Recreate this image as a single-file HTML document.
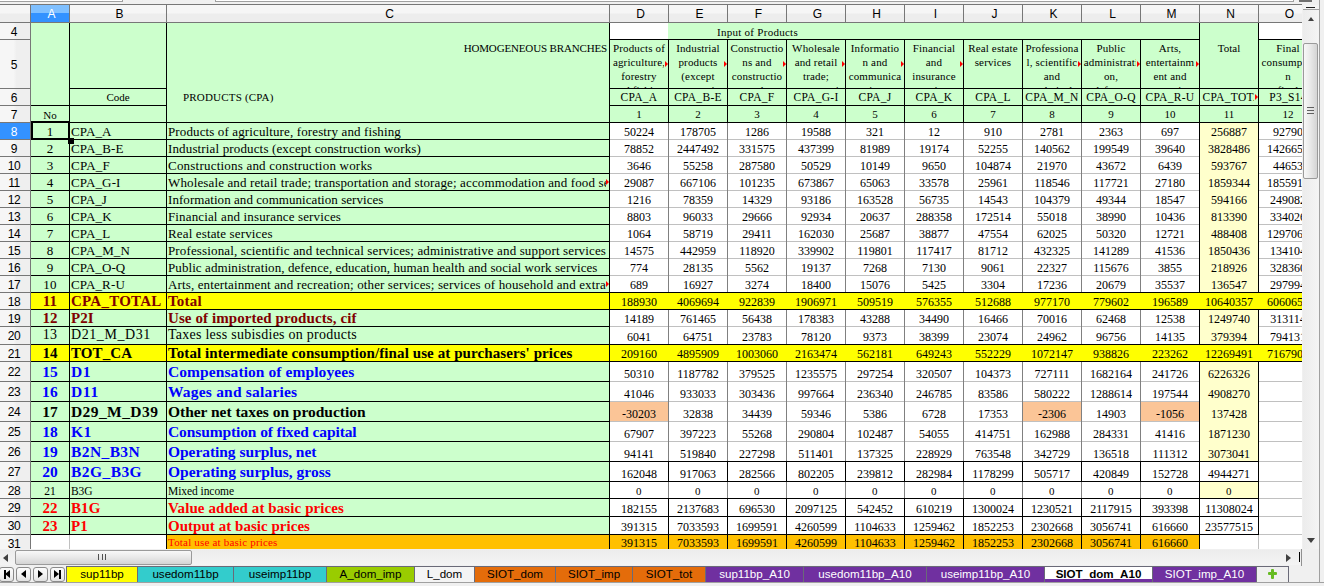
<!DOCTYPE html>
<html><head><meta charset="utf-8"><style>
html,body{margin:0;padding:0;width:1324px;height:586px;overflow:hidden;background:#f0f0f0;}
div{position:absolute;}
.t{white-space:nowrap;line-height:0;}
.c{overflow:hidden;}
#sheet{left:0;top:0;width:1302px;height:549px;overflow:hidden;}
</style></head><body>
<div style="left:0px;top:0px;width:1324px;height:4px;background:#f0f0f0;"></div>
<div style="left:0px;top:0px;width:123px;height:1px;background:#ffffff;"></div>
<div style="left:0px;top:1px;width:123px;height:1px;background:#a0a0a0;"></div>
<div style="left:215px;top:0px;width:1079px;height:1px;background:#ffffff;"></div>
<div style="left:215px;top:1px;width:1079px;height:1px;background:#a0a0a0;"></div>
<div style="left:1293px;top:0px;width:1px;height:2px;background:#a0a0a0;"></div>
<div style="left:122px;top:0px;width:1px;height:2px;background:#a0a0a0;"></div>
<div style="left:215px;top:0px;width:1px;height:2px;background:#a0a0a0;"></div>
<div style="left:1299px;top:0px;width:13px;height:2px;background:#707070;"></div>
<div style="left:0px;top:4px;width:1302px;height:1px;background:#777777;"></div>
<div style="left:0px;top:5px;width:1302px;height:17px;background:linear-gradient(#f6f6f6,#f6f6f6 45%,#ededed 55%,#ededed);"></div>
<div style="left:0px;top:22px;width:1302px;height:1px;background:#777777;"></div>
<div style="left:31px;top:5px;width:38px;height:17px;background:linear-gradient(#80c0ff,#80c0ff 47%,#3392ff 50%,#3392ff);"></div>
<div style="left:69px;top:5px;width:1px;height:17px;background:#777777;"></div>
<div style="left:166px;top:5px;width:1px;height:17px;background:#777777;"></div>
<div style="left:609px;top:5px;width:1px;height:17px;background:#777777;"></div>
<div style="left:668px;top:5px;width:1px;height:17px;background:#777777;"></div>
<div style="left:727px;top:5px;width:1px;height:17px;background:#777777;"></div>
<div style="left:786px;top:5px;width:1px;height:17px;background:#777777;"></div>
<div style="left:845px;top:5px;width:1px;height:17px;background:#777777;"></div>
<div style="left:904px;top:5px;width:1px;height:17px;background:#777777;"></div>
<div style="left:963px;top:5px;width:1px;height:17px;background:#777777;"></div>
<div style="left:1022px;top:5px;width:1px;height:17px;background:#777777;"></div>
<div style="left:1081px;top:5px;width:1px;height:17px;background:#777777;"></div>
<div style="left:1140px;top:5px;width:1px;height:17px;background:#777777;"></div>
<div style="left:1199px;top:5px;width:1px;height:17px;background:#777777;"></div>
<div style="left:1258px;top:5px;width:1px;height:17px;background:#777777;"></div>
<div style="left:30px;top:5px;width:1px;height:17px;background:#777777;"></div>
<div class="t" style="left:32.5px;width:38px;text-align:center;top:14.34px;font-family:'Liberation Sans', sans-serif;font-size:12px;color:#ffffff">A</div>
<div class="t" style="left:71.5px;width:96px;text-align:center;top:14.34px;font-family:'Liberation Sans', sans-serif;font-size:12px;color:#000000">B</div>
<div class="t" style="left:168.5px;width:442px;text-align:center;top:14.34px;font-family:'Liberation Sans', sans-serif;font-size:12px;color:#000000">C</div>
<div class="t" style="left:611.5px;width:58px;text-align:center;top:14.34px;font-family:'Liberation Sans', sans-serif;font-size:12px;color:#000000">D</div>
<div class="t" style="left:670.5px;width:58px;text-align:center;top:14.34px;font-family:'Liberation Sans', sans-serif;font-size:12px;color:#000000">E</div>
<div class="t" style="left:729.5px;width:58px;text-align:center;top:14.34px;font-family:'Liberation Sans', sans-serif;font-size:12px;color:#000000">F</div>
<div class="t" style="left:788.5px;width:58px;text-align:center;top:14.34px;font-family:'Liberation Sans', sans-serif;font-size:12px;color:#000000">G</div>
<div class="t" style="left:847.5px;width:58px;text-align:center;top:14.34px;font-family:'Liberation Sans', sans-serif;font-size:12px;color:#000000">H</div>
<div class="t" style="left:906.5px;width:58px;text-align:center;top:14.34px;font-family:'Liberation Sans', sans-serif;font-size:12px;color:#000000">I</div>
<div class="t" style="left:965.5px;width:58px;text-align:center;top:14.34px;font-family:'Liberation Sans', sans-serif;font-size:12px;color:#000000">J</div>
<div class="t" style="left:1024.5px;width:58px;text-align:center;top:14.34px;font-family:'Liberation Sans', sans-serif;font-size:12px;color:#000000">K</div>
<div class="t" style="left:1083.5px;width:58px;text-align:center;top:14.34px;font-family:'Liberation Sans', sans-serif;font-size:12px;color:#000000">L</div>
<div class="t" style="left:1142.5px;width:58px;text-align:center;top:14.34px;font-family:'Liberation Sans', sans-serif;font-size:12px;color:#000000">M</div>
<div class="t" style="left:1201.5px;width:58px;text-align:center;top:14.34px;font-family:'Liberation Sans', sans-serif;font-size:12px;color:#000000">N</div>
<div class="t" style="left:1260.5px;width:58px;text-align:center;top:14.34px;font-family:'Liberation Sans', sans-serif;font-size:12px;color:#000000">O</div>
<div style="left:0px;top:23px;width:30px;height:526px;background:linear-gradient(90deg,#f6f6f6,#f6f6f6 45%,#efefef 55%,#efefef);"></div>
<div style="left:30px;top:23px;width:1px;height:526px;background:#777777;"></div>
<div style="left:0px;top:39px;width:30px;height:1px;background:#777777;"></div>
<div class="t" style="left:0;width:28px;letter-spacing:-0.4px;text-align:center;top:31.84px;font-family:'Liberation Sans', sans-serif;font-size:12px;color:#000000">4</div>
<div style="left:0px;top:88px;width:30px;height:1px;background:#777777;"></div>
<div class="t" style="left:0;width:28px;letter-spacing:-0.4px;text-align:center;top:64.84px;font-family:'Liberation Sans', sans-serif;font-size:12px;color:#000000">5</div>
<div style="left:0px;top:105px;width:30px;height:1px;background:#777777;"></div>
<div class="t" style="left:0;width:28px;letter-spacing:-0.4px;text-align:center;top:97.84px;font-family:'Liberation Sans', sans-serif;font-size:12px;color:#000000">6</div>
<div style="left:0px;top:122px;width:30px;height:1px;background:#777777;"></div>
<div class="t" style="left:0;width:28px;letter-spacing:-0.4px;text-align:center;top:114.84px;font-family:'Liberation Sans', sans-serif;font-size:12px;color:#000000">7</div>
<div style="left:0px;top:123px;width:30px;height:16px;background:#3392ff;"></div>
<div style="left:0px;top:139px;width:30px;height:1px;background:#777777;"></div>
<div class="t" style="left:0;width:28px;letter-spacing:-0.4px;text-align:center;top:131.84px;font-family:'Liberation Sans', sans-serif;font-size:12px;color:#ffffff">8</div>
<div style="left:0px;top:156px;width:30px;height:1px;background:#777777;"></div>
<div class="t" style="left:0;width:28px;letter-spacing:-0.4px;text-align:center;top:148.84px;font-family:'Liberation Sans', sans-serif;font-size:12px;color:#000000">9</div>
<div style="left:0px;top:173px;width:30px;height:1px;background:#777777;"></div>
<div class="t" style="left:0;width:28px;letter-spacing:-0.4px;text-align:center;top:165.84px;font-family:'Liberation Sans', sans-serif;font-size:12px;color:#000000">10</div>
<div style="left:0px;top:190px;width:30px;height:1px;background:#777777;"></div>
<div class="t" style="left:0;width:28px;letter-spacing:-0.4px;text-align:center;top:182.84px;font-family:'Liberation Sans', sans-serif;font-size:12px;color:#000000">11</div>
<div style="left:0px;top:207px;width:30px;height:1px;background:#777777;"></div>
<div class="t" style="left:0;width:28px;letter-spacing:-0.4px;text-align:center;top:199.84px;font-family:'Liberation Sans', sans-serif;font-size:12px;color:#000000">12</div>
<div style="left:0px;top:224px;width:30px;height:1px;background:#777777;"></div>
<div class="t" style="left:0;width:28px;letter-spacing:-0.4px;text-align:center;top:216.84px;font-family:'Liberation Sans', sans-serif;font-size:12px;color:#000000">13</div>
<div style="left:0px;top:241px;width:30px;height:1px;background:#777777;"></div>
<div class="t" style="left:0;width:28px;letter-spacing:-0.4px;text-align:center;top:233.84px;font-family:'Liberation Sans', sans-serif;font-size:12px;color:#000000">14</div>
<div style="left:0px;top:258px;width:30px;height:1px;background:#777777;"></div>
<div class="t" style="left:0;width:28px;letter-spacing:-0.4px;text-align:center;top:250.84px;font-family:'Liberation Sans', sans-serif;font-size:12px;color:#000000">15</div>
<div style="left:0px;top:275px;width:30px;height:1px;background:#777777;"></div>
<div class="t" style="left:0;width:28px;letter-spacing:-0.4px;text-align:center;top:267.84px;font-family:'Liberation Sans', sans-serif;font-size:12px;color:#000000">16</div>
<div style="left:0px;top:292px;width:30px;height:1px;background:#777777;"></div>
<div class="t" style="left:0;width:28px;letter-spacing:-0.4px;text-align:center;top:284.84px;font-family:'Liberation Sans', sans-serif;font-size:12px;color:#000000">17</div>
<div style="left:0px;top:309px;width:30px;height:1px;background:#777777;"></div>
<div class="t" style="left:0;width:28px;letter-spacing:-0.4px;text-align:center;top:301.84px;font-family:'Liberation Sans', sans-serif;font-size:12px;color:#000000">18</div>
<div style="left:0px;top:326px;width:30px;height:1px;background:#777777;"></div>
<div class="t" style="left:0;width:28px;letter-spacing:-0.4px;text-align:center;top:318.84px;font-family:'Liberation Sans', sans-serif;font-size:12px;color:#000000">19</div>
<div style="left:0px;top:344px;width:30px;height:1px;background:#777777;"></div>
<div class="t" style="left:0;width:28px;letter-spacing:-0.4px;text-align:center;top:336.34px;font-family:'Liberation Sans', sans-serif;font-size:12px;color:#000000">20</div>
<div style="left:0px;top:361px;width:30px;height:1px;background:#777777;"></div>
<div class="t" style="left:0;width:28px;letter-spacing:-0.4px;text-align:center;top:353.84px;font-family:'Liberation Sans', sans-serif;font-size:12px;color:#000000">21</div>
<div style="left:0px;top:381px;width:30px;height:1px;background:#777777;"></div>
<div class="t" style="left:0;width:28px;letter-spacing:-0.4px;text-align:center;top:372.34px;font-family:'Liberation Sans', sans-serif;font-size:12px;color:#000000">22</div>
<div style="left:0px;top:401px;width:30px;height:1px;background:#777777;"></div>
<div class="t" style="left:0;width:28px;letter-spacing:-0.4px;text-align:center;top:392.34px;font-family:'Liberation Sans', sans-serif;font-size:12px;color:#000000">23</div>
<div style="left:0px;top:421px;width:30px;height:1px;background:#777777;"></div>
<div class="t" style="left:0;width:28px;letter-spacing:-0.4px;text-align:center;top:412.34px;font-family:'Liberation Sans', sans-serif;font-size:12px;color:#000000">24</div>
<div style="left:0px;top:441px;width:30px;height:1px;background:#777777;"></div>
<div class="t" style="left:0;width:28px;letter-spacing:-0.4px;text-align:center;top:432.34px;font-family:'Liberation Sans', sans-serif;font-size:12px;color:#000000">25</div>
<div style="left:0px;top:461px;width:30px;height:1px;background:#777777;"></div>
<div class="t" style="left:0;width:28px;letter-spacing:-0.4px;text-align:center;top:452.34px;font-family:'Liberation Sans', sans-serif;font-size:12px;color:#000000">26</div>
<div style="left:0px;top:481px;width:30px;height:1px;background:#777777;"></div>
<div class="t" style="left:0;width:28px;letter-spacing:-0.4px;text-align:center;top:472.34px;font-family:'Liberation Sans', sans-serif;font-size:12px;color:#000000">27</div>
<div style="left:0px;top:498px;width:30px;height:1px;background:#777777;"></div>
<div class="t" style="left:0;width:28px;letter-spacing:-0.4px;text-align:center;top:490.84px;font-family:'Liberation Sans', sans-serif;font-size:12px;color:#000000">28</div>
<div style="left:0px;top:516px;width:30px;height:1px;background:#777777;"></div>
<div class="t" style="left:0;width:28px;letter-spacing:-0.4px;text-align:center;top:508.34px;font-family:'Liberation Sans', sans-serif;font-size:12px;color:#000000">29</div>
<div style="left:0px;top:534px;width:30px;height:1px;background:#777777;"></div>
<div class="t" style="left:0;width:28px;letter-spacing:-0.4px;text-align:center;top:526.34px;font-family:'Liberation Sans', sans-serif;font-size:12px;color:#000000">30</div>
<div class="t" style="left:0;width:28px;letter-spacing:-0.4px;text-align:center;top:544.34px;font-family:'Liberation Sans', sans-serif;font-size:12px;color:#000000">31</div>
<div style="left:1302px;top:5px;width:22px;height:544px;background:#f0f0f0;"></div>
<div style="left:1303px;top:5px;width:16px;height:5px;background:#f4f4f4;"></div>
<div style="left:1306px;top:7px;width:9px;height:1px;background:#202020;"></div>
<div style="left:1303px;top:9px;width:16px;height:1px;background:#a0a0a0;"></div>
<div style="left:1303px;top:10px;width:16px;height:539px;background:linear-gradient(90deg,#ececec,#f4f4f4);"></div>
<div style="left:1319px;top:0px;width:1px;height:582px;background:#a0a0a0;"></div>
<div style="left:1308px;top:17px;width:0;height:0;border-left:3.5px solid transparent;border-right:3.5px solid transparent;border-bottom:4px solid #404040"></div>
<div style="left:1303px;top:43px;width:15px;height:136px;background:linear-gradient(90deg,#f8f8f8,#e8e8e8 50%,#d4d4d4);border:1px solid #9a9a9a;border-radius:2px;box-sizing:border-box"></div>
<div style="left:1307px;top:107px;width:7px;height:1px;background:#606060;"></div>
<div style="left:1307px;top:110px;width:7px;height:1px;background:#606060;"></div>
<div style="left:1307px;top:113px;width:7px;height:1px;background:#606060;"></div>
<div style="left:1307px;top:538px;width:0;height:0;border-left:4px solid transparent;border-right:4px solid transparent;border-top:5px solid #404040"></div>
<div style="left:0px;top:549px;width:1302px;height:17px;background:#f0f0f0;"></div>
<div style="left:0px;top:550px;width:1302px;height:15px;background:linear-gradient(#ececec,#f4f4f4);"></div>
<div style="left:3px;top:554px;width:0;height:0;border-top:4px solid transparent;border-bottom:4px solid transparent;border-right:5px solid #404040"></div>
<div style="left:15px;top:550px;width:177px;height:15px;background:linear-gradient(#f8f8f8,#e8e8e8 50%,#d4d4d4);border:1px solid #9a9a9a;border-radius:2px;box-sizing:border-box"></div>
<div style="left:98px;top:554px;width:1px;height:6px;background:#505050;"></div>
<div style="left:102px;top:554px;width:1px;height:6px;background:#505050;"></div>
<div style="left:105px;top:554px;width:1px;height:6px;background:#505050;"></div>
<div style="left:1286px;top:554px;width:0;height:0;border-top:4px solid transparent;border-bottom:4px solid transparent;border-left:5px solid #404040"></div>
<div style="left:1299px;top:552px;width:1px;height:10px;background:#000000;"></div>
<div style="left:1301px;top:549px;width:1px;height:17px;background:#909090;"></div>
<div style="left:1288px;top:566px;width:14px;height:1px;background:#909090;"></div>
<div style="left:0px;top:566px;width:1324px;height:20px;background:#f0f0f0;"></div>
<div style="left:-1px;top:567px;width:15px;height:15px;background:linear-gradient(#fbfbfb,#f4f4f4 50%,#e2e2e2);border:1px solid #8a8a8a;border-radius:3px;box-sizing:border-box"></div>
<div style="left:16px;top:567px;width:15px;height:15px;background:linear-gradient(#fbfbfb,#f4f4f4 50%,#e2e2e2);border:1px solid #8a8a8a;border-radius:3px;box-sizing:border-box"></div>
<div style="left:33px;top:567px;width:15px;height:15px;background:linear-gradient(#fbfbfb,#f4f4f4 50%,#e2e2e2);border:1px solid #8a8a8a;border-radius:3px;box-sizing:border-box"></div>
<div style="left:50px;top:567px;width:15px;height:15px;background:linear-gradient(#fbfbfb,#f4f4f4 50%,#e2e2e2);border:1px solid #8a8a8a;border-radius:3px;box-sizing:border-box"></div>
<div style="left:4px;top:570px;width:1.5px;height:9px;background:#000"></div><div style="left:5px;top:570px;width:0;height:0;border-top:4.5px solid transparent;border-bottom:4.5px solid transparent;border-right:5px solid #000"></div>
<div style="left:21px;top:570px;width:0;height:0;border-top:4.5px solid transparent;border-bottom:4.5px solid transparent;border-right:5px solid #000"></div>
<div style="left:38px;top:570px;width:0;height:0;border-top:4.5px solid transparent;border-bottom:4.5px solid transparent;border-left:5px solid #000"></div>
<div style="left:54px;top:570px;width:0;height:0;border-top:4.5px solid transparent;border-bottom:4.5px solid transparent;border-left:5px solid #000"></div><div style="left:59px;top:570px;width:1.5px;height:9px;background:#000"></div>
<div style="left:66px;top:566px;width:1223px;height:17px;background:#6a6a78;"></div>
<div style="left:67px;top:567px;width:70px;height:15px;background:#ffff00;"></div>
<div class="t" style="left:67px;width:70px;text-align:center;top:574.28px;font-family:'Liberation Sans', sans-serif;font-size:11.6px;font-weight:400;color:#000">sup11bp</div>
<div style="left:138px;top:567px;width:95px;height:15px;background:#33cccc;"></div>
<div class="t" style="left:138px;width:95px;text-align:center;top:574.28px;font-family:'Liberation Sans', sans-serif;font-size:11.6px;font-weight:400;color:#000">usedom11bp</div>
<div style="left:234px;top:567px;width:92px;height:15px;background:#33cccc;"></div>
<div class="t" style="left:234px;width:92px;text-align:center;top:574.28px;font-family:'Liberation Sans', sans-serif;font-size:11.6px;font-weight:400;color:#000">useimp11bp</div>
<div style="left:327px;top:567px;width:87px;height:15px;background:#99cc00;"></div>
<div class="t" style="left:327px;width:87px;text-align:center;top:574.28px;font-family:'Liberation Sans', sans-serif;font-size:11.6px;font-weight:400;color:#000">A_dom_imp</div>
<div style="left:415px;top:567px;width:59px;height:15px;background:#f4f4f4;"></div>
<div class="t" style="left:415px;width:59px;text-align:center;top:574.28px;font-family:'Liberation Sans', sans-serif;font-size:11.6px;font-weight:400;color:#000">L_dom</div>
<div style="left:475px;top:567px;width:80px;height:15px;background:#e46c0a;"></div>
<div class="t" style="left:475px;width:80px;text-align:center;top:574.28px;font-family:'Liberation Sans', sans-serif;font-size:11.6px;font-weight:400;color:#000">SIOT_dom</div>
<div style="left:556px;top:567px;width:76px;height:15px;background:#e46c0a;"></div>
<div class="t" style="left:556px;width:76px;text-align:center;top:574.28px;font-family:'Liberation Sans', sans-serif;font-size:11.6px;font-weight:400;color:#000">SIOT_imp</div>
<div style="left:633px;top:567px;width:72px;height:15px;background:#e46c0a;"></div>
<div class="t" style="left:633px;width:72px;text-align:center;top:574.28px;font-family:'Liberation Sans', sans-serif;font-size:11.6px;font-weight:400;color:#000">SIOT_tot</div>
<div style="left:706px;top:567px;width:97px;height:15px;background:#7030a0;"></div>
<div class="t" style="left:706px;width:97px;text-align:center;top:574.28px;font-family:'Liberation Sans', sans-serif;font-size:11.6px;font-weight:400;color:#fff">sup11bp_A10</div>
<div style="left:804px;top:567px;width:122px;height:15px;background:#7030a0;"></div>
<div class="t" style="left:804px;width:122px;text-align:center;top:574.28px;font-family:'Liberation Sans', sans-serif;font-size:11.6px;font-weight:400;color:#fff">usedom11bp_A10</div>
<div style="left:927px;top:567px;width:117px;height:15px;background:#7030a0;"></div>
<div class="t" style="left:927px;width:117px;text-align:center;top:574.28px;font-family:'Liberation Sans', sans-serif;font-size:11.6px;font-weight:400;color:#fff">useimp11bp_A10</div>
<div style="left:1045px;top:567px;width:107px;height:15px;background:#ffffff;"></div>
<div style="left:1045px;top:579px;width:107px;height:3px;background:#7030a0;"></div>
<div class="t" style="left:1045px;width:107px;text-align:center;top:574.28px;font-family:'Liberation Sans', sans-serif;font-size:11.6px;font-weight:700;color:#000">SIOT_dom_A10</div>
<div style="left:1153px;top:567px;width:103px;height:15px;background:#7030a0;"></div>
<div class="t" style="left:1153px;width:103px;text-align:center;top:574.28px;font-family:'Liberation Sans', sans-serif;font-size:11.6px;font-weight:400;color:#fff">SIOT_imp_A10</div>
<div style="left:1257px;top:567px;width:31px;height:15px;background:#f0f0f0;"></div>
<div style="left:1271px;top:569px;width:3px;height:10px;background:#66bb22;border-radius:1px"></div><div style="left:1268px;top:572px;width:9px;height:3px;background:#66bb22;border-radius:1px"></div>
<div style="left:1319px;top:566px;width:1px;height:16px;background:#a0a0a0;"></div>
<div style="left:1288px;top:566px;width:1px;height:16px;background:#6a6a78;"></div>
<div style="left:0px;top:582px;width:1324px;height:1px;background:#a0a0a0;"></div>
<div style="left:0px;top:583px;width:1324px;height:3px;background:#f0f0f0;"></div>
<div id="sheet">
<div style="left:31px;top:23px;width:1271px;height:526px;background:#ffffff;"></div>
<div style="left:69px;top:23px;width:1px;height:527px;background:#c0c0c0;"></div>
<div style="left:166px;top:23px;width:1px;height:527px;background:#c0c0c0;"></div>
<div style="left:609px;top:23px;width:1px;height:527px;background:#c0c0c0;"></div>
<div style="left:668px;top:23px;width:1px;height:527px;background:#c0c0c0;"></div>
<div style="left:727px;top:23px;width:1px;height:527px;background:#c0c0c0;"></div>
<div style="left:786px;top:23px;width:1px;height:527px;background:#c0c0c0;"></div>
<div style="left:845px;top:23px;width:1px;height:527px;background:#c0c0c0;"></div>
<div style="left:904px;top:23px;width:1px;height:527px;background:#c0c0c0;"></div>
<div style="left:963px;top:23px;width:1px;height:527px;background:#c0c0c0;"></div>
<div style="left:1022px;top:23px;width:1px;height:527px;background:#c0c0c0;"></div>
<div style="left:1081px;top:23px;width:1px;height:527px;background:#c0c0c0;"></div>
<div style="left:1140px;top:23px;width:1px;height:527px;background:#c0c0c0;"></div>
<div style="left:1199px;top:23px;width:1px;height:527px;background:#c0c0c0;"></div>
<div style="left:1258px;top:23px;width:1px;height:527px;background:#c0c0c0;"></div>
<div style="left:1317px;top:23px;width:1px;height:527px;background:#c0c0c0;"></div>
<div style="left:31px;top:39px;width:1272px;height:1px;background:#c0c0c0;"></div>
<div style="left:31px;top:88px;width:1272px;height:1px;background:#c0c0c0;"></div>
<div style="left:31px;top:105px;width:1272px;height:1px;background:#c0c0c0;"></div>
<div style="left:31px;top:122px;width:1272px;height:1px;background:#c0c0c0;"></div>
<div style="left:31px;top:139px;width:1272px;height:1px;background:#c0c0c0;"></div>
<div style="left:31px;top:156px;width:1272px;height:1px;background:#c0c0c0;"></div>
<div style="left:31px;top:173px;width:1272px;height:1px;background:#c0c0c0;"></div>
<div style="left:31px;top:190px;width:1272px;height:1px;background:#c0c0c0;"></div>
<div style="left:31px;top:207px;width:1272px;height:1px;background:#c0c0c0;"></div>
<div style="left:31px;top:224px;width:1272px;height:1px;background:#c0c0c0;"></div>
<div style="left:31px;top:241px;width:1272px;height:1px;background:#c0c0c0;"></div>
<div style="left:31px;top:258px;width:1272px;height:1px;background:#c0c0c0;"></div>
<div style="left:31px;top:275px;width:1272px;height:1px;background:#c0c0c0;"></div>
<div style="left:31px;top:292px;width:1272px;height:1px;background:#c0c0c0;"></div>
<div style="left:31px;top:309px;width:1272px;height:1px;background:#c0c0c0;"></div>
<div style="left:31px;top:326px;width:1272px;height:1px;background:#c0c0c0;"></div>
<div style="left:31px;top:344px;width:1272px;height:1px;background:#c0c0c0;"></div>
<div style="left:31px;top:361px;width:1272px;height:1px;background:#c0c0c0;"></div>
<div style="left:31px;top:381px;width:1272px;height:1px;background:#c0c0c0;"></div>
<div style="left:31px;top:401px;width:1272px;height:1px;background:#c0c0c0;"></div>
<div style="left:31px;top:421px;width:1272px;height:1px;background:#c0c0c0;"></div>
<div style="left:31px;top:441px;width:1272px;height:1px;background:#c0c0c0;"></div>
<div style="left:31px;top:461px;width:1272px;height:1px;background:#c0c0c0;"></div>
<div style="left:31px;top:481px;width:1272px;height:1px;background:#c0c0c0;"></div>
<div style="left:31px;top:498px;width:1272px;height:1px;background:#c0c0c0;"></div>
<div style="left:31px;top:516px;width:1272px;height:1px;background:#c0c0c0;"></div>
<div style="left:31px;top:534px;width:1272px;height:1px;background:#c0c0c0;"></div>
<div style="left:31px;top:552px;width:1272px;height:1px;background:#c0c0c0;"></div>
<div style="left:31px;top:23px;width:578px;height:511px;background:#ccffcc;"></div>
<div style="left:31px;top:293px;width:1286px;height:16px;background:#ffff00;"></div>
<div style="left:31px;top:345px;width:1286px;height:16px;background:#ffff00;"></div>
<div style="left:669px;top:23px;width:530px;height:16px;background:#ccffcc;"></div>
<div style="left:668px;top:23px;width:1px;height:16px;background:#ccffcc;"></div>
<div style="left:1200px;top:23px;width:58px;height:65px;background:#ccffcc;"></div>
<div style="left:610px;top:40px;width:707px;height:82px;background:#ccffcc;"></div>
<div style="left:1200px;top:123px;width:58px;height:169px;background:#ffffcc;"></div>
<div style="left:1200px;top:310px;width:58px;height:34px;background:#ffffcc;"></div>
<div style="left:1200px;top:362px;width:58px;height:99px;background:#ffffcc;"></div>
<div style="left:1200px;top:482px;width:58px;height:16px;background:#ffffcc;"></div>
<div style="left:610px;top:402px;width:58px;height:19px;background:#fbc597;"></div>
<div style="left:1023px;top:402px;width:58px;height:19px;background:#fbc597;"></div>
<div style="left:1141px;top:402px;width:58px;height:19px;background:#fbc597;"></div>
<div style="left:167px;top:535px;width:1032px;height:17px;background:#ffc000;"></div>
<div style="left:69px;top:23px;width:1px;height:512px;background:#000000;"></div>
<div style="left:166px;top:23px;width:1px;height:512px;background:#000000;"></div>
<div style="left:166px;top:534px;width:1px;height:16px;background:#000000;"></div>
<div style="left:609px;top:23px;width:1px;height:527px;background:#000000;"></div>
<div style="left:668px;top:39px;width:1px;height:84px;background:#000000;"></div>
<div style="left:668px;top:122px;width:1px;height:171px;background:#808080;"></div>
<div style="left:668px;top:309px;width:1px;height:36px;background:#808080;"></div>
<div style="left:668px;top:361px;width:1px;height:101px;background:#808080;"></div>
<div style="left:668px;top:461px;width:1px;height:21px;background:#000000;"></div>
<div style="left:668px;top:481px;width:1px;height:18px;background:#808080;"></div>
<div style="left:668px;top:498px;width:1px;height:52px;background:#000000;"></div>
<div style="left:727px;top:39px;width:1px;height:84px;background:#000000;"></div>
<div style="left:727px;top:122px;width:1px;height:171px;background:#808080;"></div>
<div style="left:727px;top:309px;width:1px;height:36px;background:#808080;"></div>
<div style="left:727px;top:361px;width:1px;height:101px;background:#808080;"></div>
<div style="left:727px;top:461px;width:1px;height:21px;background:#000000;"></div>
<div style="left:727px;top:481px;width:1px;height:18px;background:#808080;"></div>
<div style="left:727px;top:498px;width:1px;height:52px;background:#000000;"></div>
<div style="left:786px;top:39px;width:1px;height:84px;background:#000000;"></div>
<div style="left:786px;top:122px;width:1px;height:171px;background:#808080;"></div>
<div style="left:786px;top:309px;width:1px;height:36px;background:#808080;"></div>
<div style="left:786px;top:361px;width:1px;height:101px;background:#808080;"></div>
<div style="left:786px;top:461px;width:1px;height:21px;background:#000000;"></div>
<div style="left:786px;top:481px;width:1px;height:18px;background:#808080;"></div>
<div style="left:786px;top:498px;width:1px;height:52px;background:#000000;"></div>
<div style="left:845px;top:39px;width:1px;height:84px;background:#000000;"></div>
<div style="left:845px;top:122px;width:1px;height:171px;background:#808080;"></div>
<div style="left:845px;top:309px;width:1px;height:36px;background:#808080;"></div>
<div style="left:845px;top:361px;width:1px;height:101px;background:#808080;"></div>
<div style="left:845px;top:461px;width:1px;height:21px;background:#000000;"></div>
<div style="left:845px;top:481px;width:1px;height:18px;background:#808080;"></div>
<div style="left:845px;top:498px;width:1px;height:52px;background:#000000;"></div>
<div style="left:904px;top:39px;width:1px;height:84px;background:#000000;"></div>
<div style="left:904px;top:122px;width:1px;height:171px;background:#808080;"></div>
<div style="left:904px;top:309px;width:1px;height:36px;background:#808080;"></div>
<div style="left:904px;top:361px;width:1px;height:101px;background:#808080;"></div>
<div style="left:904px;top:461px;width:1px;height:21px;background:#000000;"></div>
<div style="left:904px;top:481px;width:1px;height:18px;background:#808080;"></div>
<div style="left:904px;top:498px;width:1px;height:52px;background:#000000;"></div>
<div style="left:963px;top:39px;width:1px;height:84px;background:#000000;"></div>
<div style="left:963px;top:122px;width:1px;height:171px;background:#808080;"></div>
<div style="left:963px;top:309px;width:1px;height:36px;background:#808080;"></div>
<div style="left:963px;top:361px;width:1px;height:101px;background:#808080;"></div>
<div style="left:963px;top:461px;width:1px;height:21px;background:#000000;"></div>
<div style="left:963px;top:481px;width:1px;height:18px;background:#808080;"></div>
<div style="left:963px;top:498px;width:1px;height:52px;background:#000000;"></div>
<div style="left:1022px;top:39px;width:1px;height:84px;background:#000000;"></div>
<div style="left:1022px;top:122px;width:1px;height:171px;background:#808080;"></div>
<div style="left:1022px;top:309px;width:1px;height:36px;background:#808080;"></div>
<div style="left:1022px;top:361px;width:1px;height:101px;background:#808080;"></div>
<div style="left:1022px;top:461px;width:1px;height:21px;background:#000000;"></div>
<div style="left:1022px;top:481px;width:1px;height:18px;background:#808080;"></div>
<div style="left:1022px;top:498px;width:1px;height:52px;background:#000000;"></div>
<div style="left:1081px;top:39px;width:1px;height:84px;background:#000000;"></div>
<div style="left:1081px;top:122px;width:1px;height:171px;background:#808080;"></div>
<div style="left:1081px;top:309px;width:1px;height:36px;background:#808080;"></div>
<div style="left:1081px;top:361px;width:1px;height:101px;background:#808080;"></div>
<div style="left:1081px;top:461px;width:1px;height:21px;background:#000000;"></div>
<div style="left:1081px;top:481px;width:1px;height:18px;background:#808080;"></div>
<div style="left:1081px;top:498px;width:1px;height:52px;background:#000000;"></div>
<div style="left:1140px;top:39px;width:1px;height:84px;background:#000000;"></div>
<div style="left:1140px;top:122px;width:1px;height:171px;background:#808080;"></div>
<div style="left:1140px;top:309px;width:1px;height:36px;background:#808080;"></div>
<div style="left:1140px;top:361px;width:1px;height:101px;background:#808080;"></div>
<div style="left:1140px;top:461px;width:1px;height:21px;background:#000000;"></div>
<div style="left:1140px;top:481px;width:1px;height:18px;background:#808080;"></div>
<div style="left:1140px;top:498px;width:1px;height:52px;background:#000000;"></div>
<div style="left:1199px;top:23px;width:1px;height:270px;background:#000000;"></div>
<div style="left:1199px;top:309px;width:1px;height:36px;background:#000000;"></div>
<div style="left:1199px;top:361px;width:1px;height:189px;background:#000000;"></div>
<div style="left:1258px;top:23px;width:1px;height:270px;background:#000000;"></div>
<div style="left:1258px;top:309px;width:1px;height:36px;background:#000000;"></div>
<div style="left:1258px;top:361px;width:1px;height:174px;background:#000000;"></div>
<div style="left:609px;top:39px;width:591px;height:1px;background:#000000;"></div>
<div style="left:1258px;top:39px;width:45px;height:1px;background:#000000;"></div>
<div style="left:69px;top:88px;width:98px;height:1px;background:#000000;"></div>
<div style="left:609px;top:88px;width:694px;height:1px;background:#000000;"></div>
<div style="left:31px;top:105px;width:136px;height:1px;background:#000000;"></div>
<div style="left:609px;top:105px;width:694px;height:1px;background:#000000;"></div>
<div style="left:31px;top:122px;width:1272px;height:1px;background:#000000;"></div>
<div style="left:31px;top:139px;width:579px;height:1px;background:#000000;"></div>
<div style="left:31px;top:156px;width:579px;height:1px;background:#000000;"></div>
<div style="left:31px;top:173px;width:579px;height:1px;background:#000000;"></div>
<div style="left:31px;top:190px;width:579px;height:1px;background:#000000;"></div>
<div style="left:31px;top:207px;width:579px;height:1px;background:#000000;"></div>
<div style="left:31px;top:224px;width:579px;height:1px;background:#000000;"></div>
<div style="left:31px;top:241px;width:579px;height:1px;background:#000000;"></div>
<div style="left:31px;top:258px;width:579px;height:1px;background:#000000;"></div>
<div style="left:31px;top:275px;width:579px;height:1px;background:#000000;"></div>
<div style="left:31px;top:292px;width:1272px;height:1px;background:#000000;"></div>
<div style="left:31px;top:309px;width:1272px;height:1px;background:#000000;"></div>
<div style="left:31px;top:326px;width:579px;height:1px;background:#000000;"></div>
<div style="left:31px;top:344px;width:1272px;height:1px;background:#000000;"></div>
<div style="left:31px;top:361px;width:1272px;height:1px;background:#000000;"></div>
<div style="left:31px;top:381px;width:579px;height:1px;background:#000000;"></div>
<div style="left:31px;top:401px;width:579px;height:1px;background:#000000;"></div>
<div style="left:31px;top:421px;width:579px;height:1px;background:#000000;"></div>
<div style="left:31px;top:441px;width:579px;height:1px;background:#000000;"></div>
<div style="left:31px;top:461px;width:1228px;height:1px;background:#000000;"></div>
<div style="left:31px;top:481px;width:1228px;height:1px;background:#000000;"></div>
<div style="left:31px;top:498px;width:1228px;height:1px;background:#000000;"></div>
<div style="left:31px;top:516px;width:1228px;height:1px;background:#000000;"></div>
<div style="left:31px;top:534px;width:1228px;height:1px;background:#000000;"></div>
<div class="t" style="top:47.99px;font-family:'Liberation Serif', serif;font-size:11px;font-weight:400;color:#000;letter-spacing:-0.15px;left:166px;width:441px;text-align:right;">HOMOGENEOUS BRANCHES</div>
<div class="t" style="top:96.99px;font-family:'Liberation Serif', serif;font-size:11px;font-weight:400;color:#000;letter-spacing:0.19px;left:183px;">PRODUCTS (CPA)</div>
<div class="t" style="top:96.89px;font-family:'Liberation Serif', serif;font-size:11px;font-weight:400;color:#000;left:70px;width:96px;text-align:center;">Code</div>
<div class="t" style="top:114.89px;font-family:'Liberation Serif', serif;font-size:11px;font-weight:400;color:#000;left:31px;width:38px;text-align:center;">No</div>
<div class="t" style="top:31.79px;font-family:'Liberation Serif', serif;font-size:11px;font-weight:400;color:#000;letter-spacing:0.27px;left:717px;">Input of Products</div>
<div class="t" style="top:47.89px;font-family:'Liberation Serif', serif;font-size:11px;font-weight:400;color:#000;left:1200px;width:58px;text-align:center;">Total</div>
<div class="c" style="left:610px;top:40px;width:58px;height:48px"><div class="t" style="top:7.89px;font-family:'Liberation Serif', serif;font-size:11px;font-weight:400;color:#000;letter-spacing:0.15px;left:0px;width:58px;text-align:center;">Products of</div></div>
<div class="c" style="left:610px;top:40px;width:54px;height:48px"><div class="t" style="top:21.89px;font-family:'Liberation Serif', serif;font-size:11px;font-weight:400;color:#000;letter-spacing:0.15px;left:0px;width:58px;text-align:center;">agriculture,</div></div>
<div class="c" style="left:610px;top:40px;width:58px;height:48px"><div class="t" style="top:35.89px;font-family:'Liberation Serif', serif;font-size:11px;font-weight:400;color:#000;letter-spacing:0.15px;left:0px;width:58px;text-align:center;">forestry</div></div>
<div class="c" style="left:610px;top:40px;width:58px;height:48px"><div class="t" style="top:49.89px;font-family:'Liberation Serif', serif;font-size:11px;font-weight:400;color:#000;letter-spacing:0.15px;left:0px;width:58px;text-align:center;">and fishing</div></div>
<div class="c" style="left:669px;top:40px;width:58px;height:48px"><div class="t" style="top:7.89px;font-family:'Liberation Serif', serif;font-size:11px;font-weight:400;color:#000;letter-spacing:0.15px;left:0px;width:58px;text-align:center;">Industrial</div></div>
<div class="c" style="left:669px;top:40px;width:54px;height:48px"><div class="t" style="top:21.89px;font-family:'Liberation Serif', serif;font-size:11px;font-weight:400;color:#000;letter-spacing:0.15px;left:0px;width:58px;text-align:center;">products</div></div>
<div class="c" style="left:669px;top:40px;width:58px;height:48px"><div class="t" style="top:35.89px;font-family:'Liberation Serif', serif;font-size:11px;font-weight:400;color:#000;letter-spacing:0.15px;left:0px;width:58px;text-align:center;">(except</div></div>
<div class="c" style="left:669px;top:40px;width:58px;height:48px"><div class="t" style="top:49.89px;font-family:'Liberation Serif', serif;font-size:11px;font-weight:400;color:#000;letter-spacing:0.15px;left:0px;width:58px;text-align:center;">construction</div></div>
<div class="c" style="left:728px;top:40px;width:58px;height:48px"><div class="t" style="top:7.89px;font-family:'Liberation Serif', serif;font-size:11px;font-weight:400;color:#000;letter-spacing:0.15px;left:0px;width:58px;text-align:center;">Constructio</div></div>
<div class="c" style="left:728px;top:40px;width:54px;height:48px"><div class="t" style="top:21.89px;font-family:'Liberation Serif', serif;font-size:11px;font-weight:400;color:#000;letter-spacing:0.15px;left:0px;width:58px;text-align:center;">ns and</div></div>
<div class="c" style="left:728px;top:40px;width:58px;height:48px"><div class="t" style="top:35.89px;font-family:'Liberation Serif', serif;font-size:11px;font-weight:400;color:#000;letter-spacing:0.15px;left:0px;width:58px;text-align:center;">constructio</div></div>
<div class="c" style="left:728px;top:40px;width:58px;height:48px"><div class="t" style="top:49.89px;font-family:'Liberation Serif', serif;font-size:11px;font-weight:400;color:#000;letter-spacing:0.15px;left:0px;width:58px;text-align:center;">works</div></div>
<div class="c" style="left:787px;top:40px;width:58px;height:48px"><div class="t" style="top:7.89px;font-family:'Liberation Serif', serif;font-size:11px;font-weight:400;color:#000;letter-spacing:0.15px;left:0px;width:58px;text-align:center;">Wholesale</div></div>
<div class="c" style="left:787px;top:40px;width:54px;height:48px"><div class="t" style="top:21.89px;font-family:'Liberation Serif', serif;font-size:11px;font-weight:400;color:#000;letter-spacing:0.15px;left:0px;width:58px;text-align:center;">and retail</div></div>
<div class="c" style="left:787px;top:40px;width:58px;height:48px"><div class="t" style="top:35.89px;font-family:'Liberation Serif', serif;font-size:11px;font-weight:400;color:#000;letter-spacing:0.15px;left:0px;width:58px;text-align:center;">trade;</div></div>
<div class="c" style="left:787px;top:40px;width:58px;height:48px"><div class="t" style="top:49.89px;font-family:'Liberation Serif', serif;font-size:11px;font-weight:400;color:#000;letter-spacing:0.15px;left:0px;width:58px;text-align:center;">transportation</div></div>
<div class="c" style="left:846px;top:40px;width:58px;height:48px"><div class="t" style="top:7.89px;font-family:'Liberation Serif', serif;font-size:11px;font-weight:400;color:#000;letter-spacing:0.15px;left:0px;width:58px;text-align:center;">Informatio</div></div>
<div class="c" style="left:846px;top:40px;width:54px;height:48px"><div class="t" style="top:21.89px;font-family:'Liberation Serif', serif;font-size:11px;font-weight:400;color:#000;letter-spacing:0.15px;left:0px;width:58px;text-align:center;">n and</div></div>
<div class="c" style="left:846px;top:40px;width:58px;height:48px"><div class="t" style="top:35.89px;font-family:'Liberation Serif', serif;font-size:11px;font-weight:400;color:#000;letter-spacing:0.15px;left:0px;width:58px;text-align:center;">communica</div></div>
<div class="c" style="left:846px;top:40px;width:58px;height:48px"><div class="t" style="top:49.89px;font-family:'Liberation Serif', serif;font-size:11px;font-weight:400;color:#000;letter-spacing:0.15px;left:0px;width:58px;text-align:center;">tion</div></div>
<div class="c" style="left:905px;top:40px;width:58px;height:48px"><div class="t" style="top:7.89px;font-family:'Liberation Serif', serif;font-size:11px;font-weight:400;color:#000;letter-spacing:0.15px;left:0px;width:58px;text-align:center;">Financial</div></div>
<div class="c" style="left:905px;top:40px;width:54px;height:48px"><div class="t" style="top:21.89px;font-family:'Liberation Serif', serif;font-size:11px;font-weight:400;color:#000;letter-spacing:0.15px;left:0px;width:58px;text-align:center;">and</div></div>
<div class="c" style="left:905px;top:40px;width:58px;height:48px"><div class="t" style="top:35.89px;font-family:'Liberation Serif', serif;font-size:11px;font-weight:400;color:#000;letter-spacing:0.15px;left:0px;width:58px;text-align:center;">insurance</div></div>
<div class="c" style="left:905px;top:40px;width:58px;height:48px"><div class="t" style="top:49.89px;font-family:'Liberation Serif', serif;font-size:11px;font-weight:400;color:#000;letter-spacing:0.15px;left:0px;width:58px;text-align:center;">services</div></div>
<div class="c" style="left:964px;top:40px;width:58px;height:48px"><div class="t" style="top:7.89px;font-family:'Liberation Serif', serif;font-size:11px;font-weight:400;color:#000;letter-spacing:0.15px;left:0px;width:58px;text-align:center;">Real estate</div></div>
<div class="c" style="left:964px;top:40px;width:58px;height:48px"><div class="t" style="top:21.89px;font-family:'Liberation Serif', serif;font-size:11px;font-weight:400;color:#000;letter-spacing:0.15px;left:0px;width:58px;text-align:center;">services</div></div>
<div class="c" style="left:1023px;top:40px;width:58px;height:48px"><div class="t" style="top:7.89px;font-family:'Liberation Serif', serif;font-size:11px;font-weight:400;color:#000;letter-spacing:0.15px;left:0px;width:58px;text-align:center;">Professiona</div></div>
<div class="c" style="left:1023px;top:40px;width:54px;height:48px"><div class="t" style="top:21.89px;font-family:'Liberation Serif', serif;font-size:11px;font-weight:400;color:#000;letter-spacing:0.15px;left:0px;width:58px;text-align:center;">l, scientific</div></div>
<div class="c" style="left:1023px;top:40px;width:58px;height:48px"><div class="t" style="top:35.89px;font-family:'Liberation Serif', serif;font-size:11px;font-weight:400;color:#000;letter-spacing:0.15px;left:0px;width:58px;text-align:center;">and</div></div>
<div class="c" style="left:1023px;top:40px;width:58px;height:48px"><div class="t" style="top:49.89px;font-family:'Liberation Serif', serif;font-size:11px;font-weight:400;color:#000;letter-spacing:0.15px;left:0px;width:58px;text-align:center;">technical</div></div>
<div class="c" style="left:1082px;top:40px;width:58px;height:48px"><div class="t" style="top:7.89px;font-family:'Liberation Serif', serif;font-size:11px;font-weight:400;color:#000;letter-spacing:0.15px;left:0px;width:58px;text-align:center;">Public</div></div>
<div class="c" style="left:1082px;top:40px;width:54px;height:48px"><div class="t" style="top:21.89px;font-family:'Liberation Serif', serif;font-size:11px;font-weight:400;color:#000;letter-spacing:0.15px;left:0px;width:58px;text-align:center;">administrati</div></div>
<div class="c" style="left:1082px;top:40px;width:58px;height:48px"><div class="t" style="top:35.89px;font-family:'Liberation Serif', serif;font-size:11px;font-weight:400;color:#000;letter-spacing:0.15px;left:0px;width:58px;text-align:center;">on,</div></div>
<div class="c" style="left:1082px;top:40px;width:58px;height:48px"><div class="t" style="top:49.89px;font-family:'Liberation Serif', serif;font-size:11px;font-weight:400;color:#000;letter-spacing:0.15px;left:0px;width:58px;text-align:center;">defence</div></div>
<div class="c" style="left:1141px;top:40px;width:58px;height:48px"><div class="t" style="top:7.89px;font-family:'Liberation Serif', serif;font-size:11px;font-weight:400;color:#000;letter-spacing:0.15px;left:0px;width:58px;text-align:center;">Arts,</div></div>
<div class="c" style="left:1141px;top:40px;width:54px;height:48px"><div class="t" style="top:21.89px;font-family:'Liberation Serif', serif;font-size:11px;font-weight:400;color:#000;letter-spacing:0.15px;left:0px;width:58px;text-align:center;">entertainm</div></div>
<div class="c" style="left:1141px;top:40px;width:58px;height:48px"><div class="t" style="top:35.89px;font-family:'Liberation Serif', serif;font-size:11px;font-weight:400;color:#000;letter-spacing:0.15px;left:0px;width:58px;text-align:center;">ent and</div></div>
<div class="c" style="left:1141px;top:40px;width:58px;height:48px"><div class="t" style="top:49.89px;font-family:'Liberation Serif', serif;font-size:11px;font-weight:400;color:#000;letter-spacing:0.15px;left:0px;width:58px;text-align:center;">recreation</div></div>
<div class="c" style="left:1259px;top:40px;width:58px;height:48px"><div class="t" style="top:7.89px;font-family:'Liberation Serif', serif;font-size:11px;font-weight:400;color:#000;letter-spacing:0.15px;left:0px;width:58px;text-align:center;">Final</div></div>
<div class="c" style="left:1259px;top:40px;width:58px;height:48px"><div class="t" style="top:21.89px;font-family:'Liberation Serif', serif;font-size:11px;font-weight:400;color:#000;letter-spacing:0.15px;left:0px;width:58px;text-align:center;">consumptio</div></div>
<div class="c" style="left:1259px;top:40px;width:58px;height:48px"><div class="t" style="top:35.89px;font-family:'Liberation Serif', serif;font-size:11px;font-weight:400;color:#000;letter-spacing:0.15px;left:0px;width:58px;text-align:center;">n</div></div>
<div class="c" style="left:1259px;top:40px;width:58px;height:48px"><div class="t" style="top:49.89px;font-family:'Liberation Serif', serif;font-size:11px;font-weight:400;color:#000;letter-spacing:0.15px;left:0px;width:58px;text-align:center;">final</div></div>
<div style="left:665px;top:61px;width:0;height:0;border-top:3px solid transparent;border-bottom:3px solid transparent;border-left:3px solid #ff0000"></div>
<div style="left:724px;top:61px;width:0;height:0;border-top:3px solid transparent;border-bottom:3px solid transparent;border-left:3px solid #ff0000"></div>
<div style="left:783px;top:61px;width:0;height:0;border-top:3px solid transparent;border-bottom:3px solid transparent;border-left:3px solid #ff0000"></div>
<div style="left:842px;top:61px;width:0;height:0;border-top:3px solid transparent;border-bottom:3px solid transparent;border-left:3px solid #ff0000"></div>
<div style="left:901px;top:61px;width:0;height:0;border-top:3px solid transparent;border-bottom:3px solid transparent;border-left:3px solid #ff0000"></div>
<div style="left:960px;top:61px;width:0;height:0;border-top:3px solid transparent;border-bottom:3px solid transparent;border-left:3px solid #ff0000"></div>
<div style="left:1078px;top:61px;width:0;height:0;border-top:3px solid transparent;border-bottom:3px solid transparent;border-left:3px solid #ff0000"></div>
<div style="left:1137px;top:61px;width:0;height:0;border-top:3px solid transparent;border-bottom:3px solid transparent;border-left:3px solid #ff0000"></div>
<div style="left:1196px;top:61px;width:0;height:0;border-top:3px solid transparent;border-bottom:3px solid transparent;border-left:3px solid #ff0000"></div>
<div class="c" style="left:610px;top:89px;width:58px;height:16px"><div class="t" style="top:8.12px;font-family:'Liberation Serif', serif;font-size:11.5px;font-weight:400;color:#000;letter-spacing:0.3px;left:0px;width:58px;text-align:center;">CPA_A</div></div>
<div class="c" style="left:610px;top:106px;width:58px;height:16px"><div class="t" style="top:7.79px;font-family:'Liberation Serif', serif;font-size:11px;font-weight:400;color:#000;left:0px;width:58px;text-align:center;">1</div></div>
<div class="c" style="left:669px;top:89px;width:58px;height:16px"><div class="t" style="top:8.12px;font-family:'Liberation Serif', serif;font-size:11.5px;font-weight:400;color:#000;letter-spacing:0.3px;left:0px;width:58px;text-align:center;">CPA_B-E</div></div>
<div class="c" style="left:669px;top:106px;width:58px;height:16px"><div class="t" style="top:7.79px;font-family:'Liberation Serif', serif;font-size:11px;font-weight:400;color:#000;left:0px;width:58px;text-align:center;">2</div></div>
<div class="c" style="left:728px;top:89px;width:58px;height:16px"><div class="t" style="top:8.12px;font-family:'Liberation Serif', serif;font-size:11.5px;font-weight:400;color:#000;letter-spacing:0.3px;left:0px;width:58px;text-align:center;">CPA_F</div></div>
<div class="c" style="left:728px;top:106px;width:58px;height:16px"><div class="t" style="top:7.79px;font-family:'Liberation Serif', serif;font-size:11px;font-weight:400;color:#000;left:0px;width:58px;text-align:center;">3</div></div>
<div class="c" style="left:787px;top:89px;width:58px;height:16px"><div class="t" style="top:8.12px;font-family:'Liberation Serif', serif;font-size:11.5px;font-weight:400;color:#000;letter-spacing:0.3px;left:0px;width:58px;text-align:center;">CPA_G-I</div></div>
<div class="c" style="left:787px;top:106px;width:58px;height:16px"><div class="t" style="top:7.79px;font-family:'Liberation Serif', serif;font-size:11px;font-weight:400;color:#000;left:0px;width:58px;text-align:center;">4</div></div>
<div class="c" style="left:846px;top:89px;width:58px;height:16px"><div class="t" style="top:8.12px;font-family:'Liberation Serif', serif;font-size:11.5px;font-weight:400;color:#000;letter-spacing:0.3px;left:0px;width:58px;text-align:center;">CPA_J</div></div>
<div class="c" style="left:846px;top:106px;width:58px;height:16px"><div class="t" style="top:7.79px;font-family:'Liberation Serif', serif;font-size:11px;font-weight:400;color:#000;left:0px;width:58px;text-align:center;">5</div></div>
<div class="c" style="left:905px;top:89px;width:58px;height:16px"><div class="t" style="top:8.12px;font-family:'Liberation Serif', serif;font-size:11.5px;font-weight:400;color:#000;letter-spacing:0.3px;left:0px;width:58px;text-align:center;">CPA_K</div></div>
<div class="c" style="left:905px;top:106px;width:58px;height:16px"><div class="t" style="top:7.79px;font-family:'Liberation Serif', serif;font-size:11px;font-weight:400;color:#000;left:0px;width:58px;text-align:center;">6</div></div>
<div class="c" style="left:964px;top:89px;width:58px;height:16px"><div class="t" style="top:8.12px;font-family:'Liberation Serif', serif;font-size:11.5px;font-weight:400;color:#000;letter-spacing:0.3px;left:0px;width:58px;text-align:center;">CPA_L</div></div>
<div class="c" style="left:964px;top:106px;width:58px;height:16px"><div class="t" style="top:7.79px;font-family:'Liberation Serif', serif;font-size:11px;font-weight:400;color:#000;left:0px;width:58px;text-align:center;">7</div></div>
<div class="c" style="left:1023px;top:89px;width:58px;height:16px"><div class="t" style="top:8.12px;font-family:'Liberation Serif', serif;font-size:11.5px;font-weight:400;color:#000;letter-spacing:0.3px;left:0px;width:58px;text-align:center;">CPA_M_N</div></div>
<div class="c" style="left:1023px;top:106px;width:58px;height:16px"><div class="t" style="top:7.79px;font-family:'Liberation Serif', serif;font-size:11px;font-weight:400;color:#000;left:0px;width:58px;text-align:center;">8</div></div>
<div class="c" style="left:1082px;top:89px;width:58px;height:16px"><div class="t" style="top:8.12px;font-family:'Liberation Serif', serif;font-size:11.5px;font-weight:400;color:#000;letter-spacing:0.3px;left:0px;width:58px;text-align:center;">CPA_O-Q</div></div>
<div class="c" style="left:1082px;top:106px;width:58px;height:16px"><div class="t" style="top:7.79px;font-family:'Liberation Serif', serif;font-size:11px;font-weight:400;color:#000;left:0px;width:58px;text-align:center;">9</div></div>
<div class="c" style="left:1141px;top:89px;width:58px;height:16px"><div class="t" style="top:8.12px;font-family:'Liberation Serif', serif;font-size:11.5px;font-weight:400;color:#000;letter-spacing:0.3px;left:0px;width:58px;text-align:center;">CPA_R-U</div></div>
<div class="c" style="left:1141px;top:106px;width:58px;height:16px"><div class="t" style="top:7.79px;font-family:'Liberation Serif', serif;font-size:11px;font-weight:400;color:#000;left:0px;width:58px;text-align:center;">10</div></div>
<div class="c" style="left:1200px;top:89px;width:54px;height:16px"><div class="t" style="top:8.12px;font-family:'Liberation Serif', serif;font-size:11.5px;font-weight:400;color:#000;letter-spacing:0.3px;left:2.5px;">CPA_TOTAL</div></div>
<div class="c" style="left:1200px;top:106px;width:58px;height:16px"><div class="t" style="top:7.79px;font-family:'Liberation Serif', serif;font-size:11px;font-weight:400;color:#000;left:0px;width:58px;text-align:center;">11</div></div>
<div class="c" style="left:1259px;top:89px;width:58px;height:16px"><div class="t" style="top:8.12px;font-family:'Liberation Serif', serif;font-size:11.5px;font-weight:400;color:#000;letter-spacing:0.3px;left:0px;width:58px;text-align:center;">P3_S14</div></div>
<div class="c" style="left:1259px;top:106px;width:58px;height:16px"><div class="t" style="top:7.79px;font-family:'Liberation Serif', serif;font-size:11px;font-weight:400;color:#000;left:0px;width:58px;text-align:center;">12</div></div>
<div style="left:1255px;top:93.5px;width:0;height:0;border-top:3px solid transparent;border-bottom:3px solid transparent;border-left:3px solid #ff0000"></div>
<div class="c" style="left:31px;top:123px;width:38px;height:16px"><div class="t" style="top:8.61px;font-family:'Liberation Serif', serif;font-size:13px;font-weight:400;color:#000;letter-spacing:0.123px;left:0px;width:38px;text-align:center;">1</div></div>
<div class="c" style="left:70px;top:123px;width:96px;height:16px"><div class="t" style="top:8.61px;font-family:'Liberation Serif', serif;font-size:13px;font-weight:400;color:#000;letter-spacing:0.123px;left:1px;">CPA_A</div></div>
<div class="c" style="left:167px;top:123px;width:442px;height:16px"><div class="t" style="top:8.61px;font-family:'Liberation Serif', serif;font-size:13px;font-weight:400;color:#000;letter-spacing:0.123px;left:1px;">Products of agriculture, forestry and fishing</div></div>
<div class="c" style="left:31px;top:140px;width:38px;height:16px"><div class="t" style="top:8.61px;font-family:'Liberation Serif', serif;font-size:13px;font-weight:400;color:#000;letter-spacing:0.144px;left:0px;width:38px;text-align:center;">2</div></div>
<div class="c" style="left:70px;top:140px;width:96px;height:16px"><div class="t" style="top:8.61px;font-family:'Liberation Serif', serif;font-size:13px;font-weight:400;color:#000;letter-spacing:0.144px;left:1px;">CPA_B-E</div></div>
<div class="c" style="left:167px;top:140px;width:442px;height:16px"><div class="t" style="top:8.61px;font-family:'Liberation Serif', serif;font-size:13px;font-weight:400;color:#000;letter-spacing:0.144px;left:1px;">Industrial products (except construction works)</div></div>
<div class="c" style="left:31px;top:157px;width:38px;height:16px"><div class="t" style="top:8.61px;font-family:'Liberation Serif', serif;font-size:13px;font-weight:400;color:#000;letter-spacing:0.211px;left:0px;width:38px;text-align:center;">3</div></div>
<div class="c" style="left:70px;top:157px;width:96px;height:16px"><div class="t" style="top:8.61px;font-family:'Liberation Serif', serif;font-size:13px;font-weight:400;color:#000;letter-spacing:0.211px;left:1px;">CPA_F</div></div>
<div class="c" style="left:167px;top:157px;width:442px;height:16px"><div class="t" style="top:8.61px;font-family:'Liberation Serif', serif;font-size:13px;font-weight:400;color:#000;letter-spacing:0.211px;left:1px;">Constructions and construction works</div></div>
<div class="c" style="left:31px;top:174px;width:38px;height:16px"><div class="t" style="top:8.61px;font-family:'Liberation Serif', serif;font-size:13px;font-weight:400;color:#000;letter-spacing:0.13px;left:0px;width:38px;text-align:center;">4</div></div>
<div class="c" style="left:70px;top:174px;width:96px;height:16px"><div class="t" style="top:8.61px;font-family:'Liberation Serif', serif;font-size:13px;font-weight:400;color:#000;letter-spacing:0.13px;left:1px;">CPA_G-I</div></div>
<div class="c" style="left:167px;top:174px;width:439px;height:16px"><div class="t" style="top:8.61px;font-family:'Liberation Serif', serif;font-size:13px;font-weight:400;color:#000;letter-spacing:0.13px;left:1px;">Wholesale and retail trade; transportation and storage; accommodation and food services</div></div>
<div class="c" style="left:31px;top:191px;width:38px;height:16px"><div class="t" style="top:8.61px;font-family:'Liberation Serif', serif;font-size:13px;font-weight:400;color:#000;letter-spacing:0.056px;left:0px;width:38px;text-align:center;">5</div></div>
<div class="c" style="left:70px;top:191px;width:96px;height:16px"><div class="t" style="top:8.61px;font-family:'Liberation Serif', serif;font-size:13px;font-weight:400;color:#000;letter-spacing:0.056px;left:1px;">CPA_J</div></div>
<div class="c" style="left:167px;top:191px;width:442px;height:16px"><div class="t" style="top:8.61px;font-family:'Liberation Serif', serif;font-size:13px;font-weight:400;color:#000;letter-spacing:0.056px;left:1px;">Information and communication services</div></div>
<div class="c" style="left:31px;top:208px;width:38px;height:16px"><div class="t" style="top:8.61px;font-family:'Liberation Serif', serif;font-size:13px;font-weight:400;color:#000;letter-spacing:0.138px;left:0px;width:38px;text-align:center;">6</div></div>
<div class="c" style="left:70px;top:208px;width:96px;height:16px"><div class="t" style="top:8.61px;font-family:'Liberation Serif', serif;font-size:13px;font-weight:400;color:#000;letter-spacing:0.138px;left:1px;">CPA_K</div></div>
<div class="c" style="left:167px;top:208px;width:442px;height:16px"><div class="t" style="top:8.61px;font-family:'Liberation Serif', serif;font-size:13px;font-weight:400;color:#000;letter-spacing:0.138px;left:1px;">Financial and insurance services</div></div>
<div class="c" style="left:31px;top:225px;width:38px;height:16px"><div class="t" style="top:8.61px;font-family:'Liberation Serif', serif;font-size:13px;font-weight:400;color:#000;letter-spacing:0.14px;left:0px;width:38px;text-align:center;">7</div></div>
<div class="c" style="left:70px;top:225px;width:96px;height:16px"><div class="t" style="top:8.61px;font-family:'Liberation Serif', serif;font-size:13px;font-weight:400;color:#000;letter-spacing:0.14px;left:1px;">CPA_L</div></div>
<div class="c" style="left:167px;top:225px;width:442px;height:16px"><div class="t" style="top:8.61px;font-family:'Liberation Serif', serif;font-size:13px;font-weight:400;color:#000;letter-spacing:0.14px;left:1px;">Real estate services</div></div>
<div class="c" style="left:31px;top:242px;width:38px;height:16px"><div class="t" style="top:8.61px;font-family:'Liberation Serif', serif;font-size:13px;font-weight:400;color:#000;letter-spacing:0.139px;left:0px;width:38px;text-align:center;">8</div></div>
<div class="c" style="left:70px;top:242px;width:96px;height:16px"><div class="t" style="top:8.61px;font-family:'Liberation Serif', serif;font-size:13px;font-weight:400;color:#000;letter-spacing:0.139px;left:1px;">CPA_M_N</div></div>
<div class="c" style="left:167px;top:242px;width:442px;height:16px"><div class="t" style="top:8.61px;font-family:'Liberation Serif', serif;font-size:13px;font-weight:400;color:#000;letter-spacing:0.139px;left:1px;">Professional, scientific and technical services; administrative and support services</div></div>
<div class="c" style="left:31px;top:259px;width:38px;height:16px"><div class="t" style="top:8.61px;font-family:'Liberation Serif', serif;font-size:13px;font-weight:400;color:#000;letter-spacing:0.08px;left:0px;width:38px;text-align:center;">9</div></div>
<div class="c" style="left:70px;top:259px;width:96px;height:16px"><div class="t" style="top:8.61px;font-family:'Liberation Serif', serif;font-size:13px;font-weight:400;color:#000;letter-spacing:0.08px;left:1px;">CPA_O-Q</div></div>
<div class="c" style="left:167px;top:259px;width:442px;height:16px"><div class="t" style="top:8.61px;font-family:'Liberation Serif', serif;font-size:13px;font-weight:400;color:#000;letter-spacing:0.08px;left:1px;">Public administration, defence, education, human health and social work services</div></div>
<div class="c" style="left:31px;top:276px;width:38px;height:16px"><div class="t" style="top:8.61px;font-family:'Liberation Serif', serif;font-size:13px;font-weight:400;color:#000;letter-spacing:0.13px;left:0px;width:38px;text-align:center;">10</div></div>
<div class="c" style="left:70px;top:276px;width:96px;height:16px"><div class="t" style="top:8.61px;font-family:'Liberation Serif', serif;font-size:13px;font-weight:400;color:#000;letter-spacing:0.13px;left:1px;">CPA_R-U</div></div>
<div class="c" style="left:167px;top:276px;width:439px;height:16px"><div class="t" style="top:8.61px;font-family:'Liberation Serif', serif;font-size:13px;font-weight:400;color:#000;letter-spacing:0.13px;left:1px;">Arts, entertainment and recreation; other services; services of household and extra-territorial organisations</div></div>
<div class="c" style="left:31px;top:293px;width:38px;height:16px"><div class="t" style="top:7.94px;font-family:'Liberation Serif', serif;font-size:15px;font-weight:700;color:#800000;letter-spacing:0.24px;left:0px;width:38px;text-align:center;">11</div></div>
<div class="c" style="left:70px;top:293px;width:96px;height:16px"><div class="t" style="top:7.94px;font-family:'Liberation Serif', serif;font-size:15px;font-weight:700;color:#800000;letter-spacing:0.24px;left:1px;">CPA_TOTAL</div></div>
<div class="c" style="left:167px;top:293px;width:442px;height:16px"><div class="t" style="top:7.94px;font-family:'Liberation Serif', serif;font-size:15px;font-weight:700;color:#800000;letter-spacing:0.24px;left:1px;">Total</div></div>
<div class="c" style="left:31px;top:310px;width:38px;height:16px"><div class="t" style="top:7.94px;font-family:'Liberation Serif', serif;font-size:15px;font-weight:700;color:#800000;letter-spacing:0.087px;left:0px;width:38px;text-align:center;">12</div></div>
<div class="c" style="left:70px;top:310px;width:96px;height:16px"><div class="t" style="top:7.94px;font-family:'Liberation Serif', serif;font-size:15px;font-weight:700;color:#800000;letter-spacing:0.087px;left:1px;">P2I</div></div>
<div class="c" style="left:167px;top:310px;width:442px;height:16px"><div class="t" style="top:7.94px;font-family:'Liberation Serif', serif;font-size:15px;font-weight:700;color:#800000;letter-spacing:0.087px;left:1px;">Use of imported products, cif</div></div>
<div class="c" style="left:31px;top:327px;width:38px;height:17px"><div class="t" style="top:8.28px;font-family:'Liberation Serif', serif;font-size:14px;font-weight:400;color:#000;letter-spacing:0.25px;left:0px;width:38px;text-align:center;">13</div></div>
<div class="c" style="left:70px;top:327px;width:96px;height:17px"><div class="t" style="top:8.28px;font-family:'Liberation Serif', serif;font-size:14px;font-weight:400;color:#000;letter-spacing:0.5800000000000001px;left:1px;">D21_M_D31</div></div>
<div class="c" style="left:167px;top:327px;width:442px;height:17px"><div class="t" style="top:8.28px;font-family:'Liberation Serif', serif;font-size:14px;font-weight:400;color:#000;letter-spacing:0.25px;left:1px;">Taxes less subisdies on products</div></div>
<div class="c" style="left:31px;top:345px;width:38px;height:16px"><div class="t" style="top:7.94px;font-family:'Liberation Serif', serif;font-size:15px;font-weight:700;color:#000;letter-spacing:0.086px;left:0px;width:38px;text-align:center;">14</div></div>
<div class="c" style="left:70px;top:345px;width:96px;height:16px"><div class="t" style="top:7.94px;font-family:'Liberation Serif', serif;font-size:15px;font-weight:700;color:#000;letter-spacing:0.086px;left:1px;">TOT_CA</div></div>
<div class="c" style="left:167px;top:345px;width:442px;height:16px"><div class="t" style="top:7.94px;font-family:'Liberation Serif', serif;font-size:15px;font-weight:700;color:#000;letter-spacing:0.086px;left:1px;">Total intermediate consumption/final use at purchasers&#39; prices</div></div>
<div class="c" style="left:31px;top:362px;width:38px;height:19px"><div class="t" style="top:9.77px;font-family:'Liberation Serif', serif;font-size:15.5px;font-weight:700;color:#0000ff;letter-spacing:0.08px;left:0px;width:38px;text-align:center;">15</div></div>
<div class="c" style="left:70px;top:362px;width:96px;height:19px"><div class="t" style="top:9.77px;font-family:'Liberation Serif', serif;font-size:15.5px;font-weight:700;color:#0000ff;letter-spacing:0.53px;left:1px;">D1</div></div>
<div class="c" style="left:167px;top:362px;width:442px;height:19px"><div class="t" style="top:9.77px;font-family:'Liberation Serif', serif;font-size:15.5px;font-weight:700;color:#0000ff;letter-spacing:0.08px;left:1px;">Compensation of employees</div></div>
<div class="c" style="left:31px;top:382px;width:38px;height:19px"><div class="t" style="top:9.77px;font-family:'Liberation Serif', serif;font-size:15.5px;font-weight:700;color:#0000ff;letter-spacing:0.2px;left:0px;width:38px;text-align:center;">16</div></div>
<div class="c" style="left:70px;top:382px;width:96px;height:19px"><div class="t" style="top:9.77px;font-family:'Liberation Serif', serif;font-size:15.5px;font-weight:700;color:#0000ff;letter-spacing:0.65px;left:1px;">D11</div></div>
<div class="c" style="left:167px;top:382px;width:442px;height:19px"><div class="t" style="top:9.77px;font-family:'Liberation Serif', serif;font-size:15.5px;font-weight:700;color:#0000ff;letter-spacing:0.2px;left:1px;">Wages and salaries</div></div>
<div class="c" style="left:31px;top:402px;width:38px;height:19px"><div class="t" style="top:9.77px;font-family:'Liberation Serif', serif;font-size:15.5px;font-weight:700;color:#000;letter-spacing:-0.03px;left:0px;width:38px;text-align:center;">17</div></div>
<div class="c" style="left:70px;top:402px;width:96px;height:19px"><div class="t" style="top:9.77px;font-family:'Liberation Serif', serif;font-size:15.5px;font-weight:700;color:#000;letter-spacing:0.42000000000000004px;left:1px;">D29_M_D39</div></div>
<div class="c" style="left:167px;top:402px;width:442px;height:19px"><div class="t" style="top:9.77px;font-family:'Liberation Serif', serif;font-size:15.5px;font-weight:700;color:#000;letter-spacing:-0.03px;left:1px;">Other net taxes on production</div></div>
<div class="c" style="left:31px;top:422px;width:38px;height:19px"><div class="t" style="top:9.77px;font-family:'Liberation Serif', serif;font-size:15.5px;font-weight:700;color:#0000ff;letter-spacing:-0.11px;left:0px;width:38px;text-align:center;">18</div></div>
<div class="c" style="left:70px;top:422px;width:96px;height:19px"><div class="t" style="top:9.77px;font-family:'Liberation Serif', serif;font-size:15.5px;font-weight:700;color:#0000ff;letter-spacing:0.34px;left:1px;">K1</div></div>
<div class="c" style="left:167px;top:422px;width:442px;height:19px"><div class="t" style="top:9.77px;font-family:'Liberation Serif', serif;font-size:15.5px;font-weight:700;color:#0000ff;letter-spacing:-0.11px;left:1px;">Consumption of fixed capital</div></div>
<div class="c" style="left:31px;top:442px;width:38px;height:19px"><div class="t" style="top:9.77px;font-family:'Liberation Serif', serif;font-size:15.5px;font-weight:700;color:#0000ff;letter-spacing:-0.05px;left:0px;width:38px;text-align:center;">19</div></div>
<div class="c" style="left:70px;top:442px;width:96px;height:19px"><div class="t" style="top:9.77px;font-family:'Liberation Serif', serif;font-size:15.5px;font-weight:700;color:#0000ff;letter-spacing:0.4px;left:1px;">B2N_B3N</div></div>
<div class="c" style="left:167px;top:442px;width:442px;height:19px"><div class="t" style="top:9.77px;font-family:'Liberation Serif', serif;font-size:15.5px;font-weight:700;color:#0000ff;letter-spacing:-0.05px;left:1px;">Operating surplus, net</div></div>
<div class="c" style="left:31px;top:462px;width:38px;height:19px"><div class="t" style="top:9.77px;font-family:'Liberation Serif', serif;font-size:15.5px;font-weight:700;color:#0000ff;letter-spacing:-0.01px;left:0px;width:38px;text-align:center;">20</div></div>
<div class="c" style="left:70px;top:462px;width:96px;height:19px"><div class="t" style="top:9.77px;font-family:'Liberation Serif', serif;font-size:15.5px;font-weight:700;color:#0000ff;letter-spacing:0.44px;left:1px;">B2G_B3G</div></div>
<div class="c" style="left:167px;top:462px;width:442px;height:19px"><div class="t" style="top:9.77px;font-family:'Liberation Serif', serif;font-size:15.5px;font-weight:700;color:#0000ff;letter-spacing:-0.01px;left:1px;">Operating surplus, gross</div></div>
<div class="c" style="left:31px;top:482px;width:38px;height:16px"><div class="t" style="top:9.12px;font-family:'Liberation Serif', serif;font-size:11.5px;font-weight:400;color:#000;letter-spacing:-0.06px;left:0px;width:38px;text-align:center;">21</div></div>
<div class="c" style="left:70px;top:482px;width:96px;height:16px"><div class="t" style="top:9.12px;font-family:'Liberation Serif', serif;font-size:11.5px;font-weight:400;color:#000;letter-spacing:-0.06px;left:1px;">B3G</div></div>
<div class="c" style="left:167px;top:482px;width:442px;height:16px"><div class="t" style="top:9.12px;font-family:'Liberation Serif', serif;font-size:11.5px;font-weight:400;color:#000;letter-spacing:-0.06px;left:1px;">Mixed income</div></div>
<div class="c" style="left:31px;top:499px;width:38px;height:17px"><div class="t" style="top:8.94px;font-family:'Liberation Serif', serif;font-size:15px;font-weight:700;color:#ff0000;letter-spacing:0.087px;left:0px;width:38px;text-align:center;">22</div></div>
<div class="c" style="left:70px;top:499px;width:96px;height:17px"><div class="t" style="top:8.94px;font-family:'Liberation Serif', serif;font-size:15px;font-weight:700;color:#ff0000;letter-spacing:0.087px;left:1px;">B1G</div></div>
<div class="c" style="left:167px;top:499px;width:442px;height:17px"><div class="t" style="top:8.94px;font-family:'Liberation Serif', serif;font-size:15px;font-weight:700;color:#ff0000;letter-spacing:0.087px;left:1px;">Value added at basic prices</div></div>
<div class="c" style="left:31px;top:517px;width:38px;height:17px"><div class="t" style="top:8.94px;font-family:'Liberation Serif', serif;font-size:15px;font-weight:700;color:#ff0000;letter-spacing:0.033px;left:0px;width:38px;text-align:center;">23</div></div>
<div class="c" style="left:70px;top:517px;width:96px;height:17px"><div class="t" style="top:8.94px;font-family:'Liberation Serif', serif;font-size:15px;font-weight:700;color:#ff0000;letter-spacing:0.033px;left:1px;">P1</div></div>
<div class="c" style="left:167px;top:517px;width:442px;height:17px"><div class="t" style="top:8.94px;font-family:'Liberation Serif', serif;font-size:15px;font-weight:700;color:#ff0000;letter-spacing:0.033px;left:1px;">Output at basic prices</div></div>
<div class="c" style="left:167px;top:535px;width:442px;height:17px"><div class="t" style="top:7.29px;font-family:'Liberation Serif', serif;font-size:11px;font-weight:400;color:#ff0000;letter-spacing:0.187px;left:1px;">Total use at basic prices</div></div>
<div style="left:606px;top:179px;width:0;height:0;border-top:3px solid transparent;border-bottom:3px solid transparent;border-left:3px solid #ff0000"></div>
<div style="left:606px;top:281px;width:0;height:0;border-top:3px solid transparent;border-bottom:3px solid transparent;border-left:3px solid #ff0000"></div>
<div class="c" style="left:610px;top:123px;width:58px;height:16px"><div class="t" style="top:8.95px;font-family:'Liberation Serif', serif;font-size:12px;font-weight:400;color:#000;left:0px;width:58px;text-align:center;">50224</div></div>
<div class="c" style="left:669px;top:123px;width:58px;height:16px"><div class="t" style="top:8.95px;font-family:'Liberation Serif', serif;font-size:12px;font-weight:400;color:#000;left:0px;width:58px;text-align:center;">178705</div></div>
<div class="c" style="left:728px;top:123px;width:58px;height:16px"><div class="t" style="top:8.95px;font-family:'Liberation Serif', serif;font-size:12px;font-weight:400;color:#000;left:0px;width:58px;text-align:center;">1286</div></div>
<div class="c" style="left:787px;top:123px;width:58px;height:16px"><div class="t" style="top:8.95px;font-family:'Liberation Serif', serif;font-size:12px;font-weight:400;color:#000;left:0px;width:58px;text-align:center;">19588</div></div>
<div class="c" style="left:846px;top:123px;width:58px;height:16px"><div class="t" style="top:8.95px;font-family:'Liberation Serif', serif;font-size:12px;font-weight:400;color:#000;left:0px;width:58px;text-align:center;">321</div></div>
<div class="c" style="left:905px;top:123px;width:58px;height:16px"><div class="t" style="top:8.95px;font-family:'Liberation Serif', serif;font-size:12px;font-weight:400;color:#000;left:0px;width:58px;text-align:center;">12</div></div>
<div class="c" style="left:964px;top:123px;width:58px;height:16px"><div class="t" style="top:8.95px;font-family:'Liberation Serif', serif;font-size:12px;font-weight:400;color:#000;left:0px;width:58px;text-align:center;">910</div></div>
<div class="c" style="left:1023px;top:123px;width:58px;height:16px"><div class="t" style="top:8.95px;font-family:'Liberation Serif', serif;font-size:12px;font-weight:400;color:#000;left:0px;width:58px;text-align:center;">2781</div></div>
<div class="c" style="left:1082px;top:123px;width:58px;height:16px"><div class="t" style="top:8.95px;font-family:'Liberation Serif', serif;font-size:12px;font-weight:400;color:#000;left:0px;width:58px;text-align:center;">2363</div></div>
<div class="c" style="left:1141px;top:123px;width:58px;height:16px"><div class="t" style="top:8.95px;font-family:'Liberation Serif', serif;font-size:12px;font-weight:400;color:#000;left:0px;width:58px;text-align:center;">697</div></div>
<div class="c" style="left:1200px;top:123px;width:58px;height:16px"><div class="t" style="top:8.95px;font-family:'Liberation Serif', serif;font-size:12px;font-weight:400;color:#000;left:0px;width:58px;text-align:center;">256887</div></div>
<div class="c" style="left:1259px;top:123px;width:58px;height:16px"><div class="t" style="top:8.95px;font-family:'Liberation Serif', serif;font-size:12px;font-weight:400;color:#000;left:0px;width:58px;text-align:center;">92790</div></div>
<div class="c" style="left:610px;top:140px;width:58px;height:16px"><div class="t" style="top:8.95px;font-family:'Liberation Serif', serif;font-size:12px;font-weight:400;color:#000;left:0px;width:58px;text-align:center;">78852</div></div>
<div class="c" style="left:669px;top:140px;width:58px;height:16px"><div class="t" style="top:8.95px;font-family:'Liberation Serif', serif;font-size:12px;font-weight:400;color:#000;left:0px;width:58px;text-align:center;">2447492</div></div>
<div class="c" style="left:728px;top:140px;width:58px;height:16px"><div class="t" style="top:8.95px;font-family:'Liberation Serif', serif;font-size:12px;font-weight:400;color:#000;left:0px;width:58px;text-align:center;">331575</div></div>
<div class="c" style="left:787px;top:140px;width:58px;height:16px"><div class="t" style="top:8.95px;font-family:'Liberation Serif', serif;font-size:12px;font-weight:400;color:#000;left:0px;width:58px;text-align:center;">437399</div></div>
<div class="c" style="left:846px;top:140px;width:58px;height:16px"><div class="t" style="top:8.95px;font-family:'Liberation Serif', serif;font-size:12px;font-weight:400;color:#000;left:0px;width:58px;text-align:center;">81989</div></div>
<div class="c" style="left:905px;top:140px;width:58px;height:16px"><div class="t" style="top:8.95px;font-family:'Liberation Serif', serif;font-size:12px;font-weight:400;color:#000;left:0px;width:58px;text-align:center;">19174</div></div>
<div class="c" style="left:964px;top:140px;width:58px;height:16px"><div class="t" style="top:8.95px;font-family:'Liberation Serif', serif;font-size:12px;font-weight:400;color:#000;left:0px;width:58px;text-align:center;">52255</div></div>
<div class="c" style="left:1023px;top:140px;width:58px;height:16px"><div class="t" style="top:8.95px;font-family:'Liberation Serif', serif;font-size:12px;font-weight:400;color:#000;left:0px;width:58px;text-align:center;">140562</div></div>
<div class="c" style="left:1082px;top:140px;width:58px;height:16px"><div class="t" style="top:8.95px;font-family:'Liberation Serif', serif;font-size:12px;font-weight:400;color:#000;left:0px;width:58px;text-align:center;">199549</div></div>
<div class="c" style="left:1141px;top:140px;width:58px;height:16px"><div class="t" style="top:8.95px;font-family:'Liberation Serif', serif;font-size:12px;font-weight:400;color:#000;left:0px;width:58px;text-align:center;">39640</div></div>
<div class="c" style="left:1200px;top:140px;width:58px;height:16px"><div class="t" style="top:8.95px;font-family:'Liberation Serif', serif;font-size:12px;font-weight:400;color:#000;left:0px;width:58px;text-align:center;">3828486</div></div>
<div class="c" style="left:1259px;top:140px;width:58px;height:16px"><div class="t" style="top:8.95px;font-family:'Liberation Serif', serif;font-size:12px;font-weight:400;color:#000;left:0px;width:58px;text-align:center;">1426656</div></div>
<div class="c" style="left:610px;top:157px;width:58px;height:16px"><div class="t" style="top:8.95px;font-family:'Liberation Serif', serif;font-size:12px;font-weight:400;color:#000;left:0px;width:58px;text-align:center;">3646</div></div>
<div class="c" style="left:669px;top:157px;width:58px;height:16px"><div class="t" style="top:8.95px;font-family:'Liberation Serif', serif;font-size:12px;font-weight:400;color:#000;left:0px;width:58px;text-align:center;">55258</div></div>
<div class="c" style="left:728px;top:157px;width:58px;height:16px"><div class="t" style="top:8.95px;font-family:'Liberation Serif', serif;font-size:12px;font-weight:400;color:#000;left:0px;width:58px;text-align:center;">287580</div></div>
<div class="c" style="left:787px;top:157px;width:58px;height:16px"><div class="t" style="top:8.95px;font-family:'Liberation Serif', serif;font-size:12px;font-weight:400;color:#000;left:0px;width:58px;text-align:center;">50529</div></div>
<div class="c" style="left:846px;top:157px;width:58px;height:16px"><div class="t" style="top:8.95px;font-family:'Liberation Serif', serif;font-size:12px;font-weight:400;color:#000;left:0px;width:58px;text-align:center;">10149</div></div>
<div class="c" style="left:905px;top:157px;width:58px;height:16px"><div class="t" style="top:8.95px;font-family:'Liberation Serif', serif;font-size:12px;font-weight:400;color:#000;left:0px;width:58px;text-align:center;">9650</div></div>
<div class="c" style="left:964px;top:157px;width:58px;height:16px"><div class="t" style="top:8.95px;font-family:'Liberation Serif', serif;font-size:12px;font-weight:400;color:#000;left:0px;width:58px;text-align:center;">104874</div></div>
<div class="c" style="left:1023px;top:157px;width:58px;height:16px"><div class="t" style="top:8.95px;font-family:'Liberation Serif', serif;font-size:12px;font-weight:400;color:#000;left:0px;width:58px;text-align:center;">21970</div></div>
<div class="c" style="left:1082px;top:157px;width:58px;height:16px"><div class="t" style="top:8.95px;font-family:'Liberation Serif', serif;font-size:12px;font-weight:400;color:#000;left:0px;width:58px;text-align:center;">43672</div></div>
<div class="c" style="left:1141px;top:157px;width:58px;height:16px"><div class="t" style="top:8.95px;font-family:'Liberation Serif', serif;font-size:12px;font-weight:400;color:#000;left:0px;width:58px;text-align:center;">6439</div></div>
<div class="c" style="left:1200px;top:157px;width:58px;height:16px"><div class="t" style="top:8.95px;font-family:'Liberation Serif', serif;font-size:12px;font-weight:400;color:#000;left:0px;width:58px;text-align:center;">593767</div></div>
<div class="c" style="left:1259px;top:157px;width:58px;height:16px"><div class="t" style="top:8.95px;font-family:'Liberation Serif', serif;font-size:12px;font-weight:400;color:#000;left:0px;width:58px;text-align:center;">44653</div></div>
<div class="c" style="left:610px;top:174px;width:58px;height:16px"><div class="t" style="top:8.95px;font-family:'Liberation Serif', serif;font-size:12px;font-weight:400;color:#000;left:0px;width:58px;text-align:center;">29087</div></div>
<div class="c" style="left:669px;top:174px;width:58px;height:16px"><div class="t" style="top:8.95px;font-family:'Liberation Serif', serif;font-size:12px;font-weight:400;color:#000;left:0px;width:58px;text-align:center;">667106</div></div>
<div class="c" style="left:728px;top:174px;width:58px;height:16px"><div class="t" style="top:8.95px;font-family:'Liberation Serif', serif;font-size:12px;font-weight:400;color:#000;left:0px;width:58px;text-align:center;">101235</div></div>
<div class="c" style="left:787px;top:174px;width:58px;height:16px"><div class="t" style="top:8.95px;font-family:'Liberation Serif', serif;font-size:12px;font-weight:400;color:#000;left:0px;width:58px;text-align:center;">673867</div></div>
<div class="c" style="left:846px;top:174px;width:58px;height:16px"><div class="t" style="top:8.95px;font-family:'Liberation Serif', serif;font-size:12px;font-weight:400;color:#000;left:0px;width:58px;text-align:center;">65063</div></div>
<div class="c" style="left:905px;top:174px;width:58px;height:16px"><div class="t" style="top:8.95px;font-family:'Liberation Serif', serif;font-size:12px;font-weight:400;color:#000;left:0px;width:58px;text-align:center;">33578</div></div>
<div class="c" style="left:964px;top:174px;width:58px;height:16px"><div class="t" style="top:8.95px;font-family:'Liberation Serif', serif;font-size:12px;font-weight:400;color:#000;left:0px;width:58px;text-align:center;">25961</div></div>
<div class="c" style="left:1023px;top:174px;width:58px;height:16px"><div class="t" style="top:8.95px;font-family:'Liberation Serif', serif;font-size:12px;font-weight:400;color:#000;left:0px;width:58px;text-align:center;">118546</div></div>
<div class="c" style="left:1082px;top:174px;width:58px;height:16px"><div class="t" style="top:8.95px;font-family:'Liberation Serif', serif;font-size:12px;font-weight:400;color:#000;left:0px;width:58px;text-align:center;">117721</div></div>
<div class="c" style="left:1141px;top:174px;width:58px;height:16px"><div class="t" style="top:8.95px;font-family:'Liberation Serif', serif;font-size:12px;font-weight:400;color:#000;left:0px;width:58px;text-align:center;">27180</div></div>
<div class="c" style="left:1200px;top:174px;width:58px;height:16px"><div class="t" style="top:8.95px;font-family:'Liberation Serif', serif;font-size:12px;font-weight:400;color:#000;left:0px;width:58px;text-align:center;">1859344</div></div>
<div class="c" style="left:1259px;top:174px;width:58px;height:16px"><div class="t" style="top:8.95px;font-family:'Liberation Serif', serif;font-size:12px;font-weight:400;color:#000;left:0px;width:58px;text-align:center;">1855916</div></div>
<div class="c" style="left:610px;top:191px;width:58px;height:16px"><div class="t" style="top:8.95px;font-family:'Liberation Serif', serif;font-size:12px;font-weight:400;color:#000;left:0px;width:58px;text-align:center;">1216</div></div>
<div class="c" style="left:669px;top:191px;width:58px;height:16px"><div class="t" style="top:8.95px;font-family:'Liberation Serif', serif;font-size:12px;font-weight:400;color:#000;left:0px;width:58px;text-align:center;">78359</div></div>
<div class="c" style="left:728px;top:191px;width:58px;height:16px"><div class="t" style="top:8.95px;font-family:'Liberation Serif', serif;font-size:12px;font-weight:400;color:#000;left:0px;width:58px;text-align:center;">14329</div></div>
<div class="c" style="left:787px;top:191px;width:58px;height:16px"><div class="t" style="top:8.95px;font-family:'Liberation Serif', serif;font-size:12px;font-weight:400;color:#000;left:0px;width:58px;text-align:center;">93186</div></div>
<div class="c" style="left:846px;top:191px;width:58px;height:16px"><div class="t" style="top:8.95px;font-family:'Liberation Serif', serif;font-size:12px;font-weight:400;color:#000;left:0px;width:58px;text-align:center;">163528</div></div>
<div class="c" style="left:905px;top:191px;width:58px;height:16px"><div class="t" style="top:8.95px;font-family:'Liberation Serif', serif;font-size:12px;font-weight:400;color:#000;left:0px;width:58px;text-align:center;">56735</div></div>
<div class="c" style="left:964px;top:191px;width:58px;height:16px"><div class="t" style="top:8.95px;font-family:'Liberation Serif', serif;font-size:12px;font-weight:400;color:#000;left:0px;width:58px;text-align:center;">14543</div></div>
<div class="c" style="left:1023px;top:191px;width:58px;height:16px"><div class="t" style="top:8.95px;font-family:'Liberation Serif', serif;font-size:12px;font-weight:400;color:#000;left:0px;width:58px;text-align:center;">104379</div></div>
<div class="c" style="left:1082px;top:191px;width:58px;height:16px"><div class="t" style="top:8.95px;font-family:'Liberation Serif', serif;font-size:12px;font-weight:400;color:#000;left:0px;width:58px;text-align:center;">49344</div></div>
<div class="c" style="left:1141px;top:191px;width:58px;height:16px"><div class="t" style="top:8.95px;font-family:'Liberation Serif', serif;font-size:12px;font-weight:400;color:#000;left:0px;width:58px;text-align:center;">18547</div></div>
<div class="c" style="left:1200px;top:191px;width:58px;height:16px"><div class="t" style="top:8.95px;font-family:'Liberation Serif', serif;font-size:12px;font-weight:400;color:#000;left:0px;width:58px;text-align:center;">594166</div></div>
<div class="c" style="left:1259px;top:191px;width:58px;height:16px"><div class="t" style="top:8.95px;font-family:'Liberation Serif', serif;font-size:12px;font-weight:400;color:#000;left:0px;width:58px;text-align:center;">249082</div></div>
<div class="c" style="left:610px;top:208px;width:58px;height:16px"><div class="t" style="top:8.95px;font-family:'Liberation Serif', serif;font-size:12px;font-weight:400;color:#000;left:0px;width:58px;text-align:center;">8803</div></div>
<div class="c" style="left:669px;top:208px;width:58px;height:16px"><div class="t" style="top:8.95px;font-family:'Liberation Serif', serif;font-size:12px;font-weight:400;color:#000;left:0px;width:58px;text-align:center;">96033</div></div>
<div class="c" style="left:728px;top:208px;width:58px;height:16px"><div class="t" style="top:8.95px;font-family:'Liberation Serif', serif;font-size:12px;font-weight:400;color:#000;left:0px;width:58px;text-align:center;">29666</div></div>
<div class="c" style="left:787px;top:208px;width:58px;height:16px"><div class="t" style="top:8.95px;font-family:'Liberation Serif', serif;font-size:12px;font-weight:400;color:#000;left:0px;width:58px;text-align:center;">92934</div></div>
<div class="c" style="left:846px;top:208px;width:58px;height:16px"><div class="t" style="top:8.95px;font-family:'Liberation Serif', serif;font-size:12px;font-weight:400;color:#000;left:0px;width:58px;text-align:center;">20637</div></div>
<div class="c" style="left:905px;top:208px;width:58px;height:16px"><div class="t" style="top:8.95px;font-family:'Liberation Serif', serif;font-size:12px;font-weight:400;color:#000;left:0px;width:58px;text-align:center;">288358</div></div>
<div class="c" style="left:964px;top:208px;width:58px;height:16px"><div class="t" style="top:8.95px;font-family:'Liberation Serif', serif;font-size:12px;font-weight:400;color:#000;left:0px;width:58px;text-align:center;">172514</div></div>
<div class="c" style="left:1023px;top:208px;width:58px;height:16px"><div class="t" style="top:8.95px;font-family:'Liberation Serif', serif;font-size:12px;font-weight:400;color:#000;left:0px;width:58px;text-align:center;">55018</div></div>
<div class="c" style="left:1082px;top:208px;width:58px;height:16px"><div class="t" style="top:8.95px;font-family:'Liberation Serif', serif;font-size:12px;font-weight:400;color:#000;left:0px;width:58px;text-align:center;">38990</div></div>
<div class="c" style="left:1141px;top:208px;width:58px;height:16px"><div class="t" style="top:8.95px;font-family:'Liberation Serif', serif;font-size:12px;font-weight:400;color:#000;left:0px;width:58px;text-align:center;">10436</div></div>
<div class="c" style="left:1200px;top:208px;width:58px;height:16px"><div class="t" style="top:8.95px;font-family:'Liberation Serif', serif;font-size:12px;font-weight:400;color:#000;left:0px;width:58px;text-align:center;">813390</div></div>
<div class="c" style="left:1259px;top:208px;width:58px;height:16px"><div class="t" style="top:8.95px;font-family:'Liberation Serif', serif;font-size:12px;font-weight:400;color:#000;left:0px;width:58px;text-align:center;">334026</div></div>
<div class="c" style="left:610px;top:225px;width:58px;height:16px"><div class="t" style="top:8.95px;font-family:'Liberation Serif', serif;font-size:12px;font-weight:400;color:#000;left:0px;width:58px;text-align:center;">1064</div></div>
<div class="c" style="left:669px;top:225px;width:58px;height:16px"><div class="t" style="top:8.95px;font-family:'Liberation Serif', serif;font-size:12px;font-weight:400;color:#000;left:0px;width:58px;text-align:center;">58719</div></div>
<div class="c" style="left:728px;top:225px;width:58px;height:16px"><div class="t" style="top:8.95px;font-family:'Liberation Serif', serif;font-size:12px;font-weight:400;color:#000;left:0px;width:58px;text-align:center;">29411</div></div>
<div class="c" style="left:787px;top:225px;width:58px;height:16px"><div class="t" style="top:8.95px;font-family:'Liberation Serif', serif;font-size:12px;font-weight:400;color:#000;left:0px;width:58px;text-align:center;">162030</div></div>
<div class="c" style="left:846px;top:225px;width:58px;height:16px"><div class="t" style="top:8.95px;font-family:'Liberation Serif', serif;font-size:12px;font-weight:400;color:#000;left:0px;width:58px;text-align:center;">25687</div></div>
<div class="c" style="left:905px;top:225px;width:58px;height:16px"><div class="t" style="top:8.95px;font-family:'Liberation Serif', serif;font-size:12px;font-weight:400;color:#000;left:0px;width:58px;text-align:center;">38877</div></div>
<div class="c" style="left:964px;top:225px;width:58px;height:16px"><div class="t" style="top:8.95px;font-family:'Liberation Serif', serif;font-size:12px;font-weight:400;color:#000;left:0px;width:58px;text-align:center;">47554</div></div>
<div class="c" style="left:1023px;top:225px;width:58px;height:16px"><div class="t" style="top:8.95px;font-family:'Liberation Serif', serif;font-size:12px;font-weight:400;color:#000;left:0px;width:58px;text-align:center;">62025</div></div>
<div class="c" style="left:1082px;top:225px;width:58px;height:16px"><div class="t" style="top:8.95px;font-family:'Liberation Serif', serif;font-size:12px;font-weight:400;color:#000;left:0px;width:58px;text-align:center;">50320</div></div>
<div class="c" style="left:1141px;top:225px;width:58px;height:16px"><div class="t" style="top:8.95px;font-family:'Liberation Serif', serif;font-size:12px;font-weight:400;color:#000;left:0px;width:58px;text-align:center;">12721</div></div>
<div class="c" style="left:1200px;top:225px;width:58px;height:16px"><div class="t" style="top:8.95px;font-family:'Liberation Serif', serif;font-size:12px;font-weight:400;color:#000;left:0px;width:58px;text-align:center;">488408</div></div>
<div class="c" style="left:1259px;top:225px;width:58px;height:16px"><div class="t" style="top:8.95px;font-family:'Liberation Serif', serif;font-size:12px;font-weight:400;color:#000;left:0px;width:58px;text-align:center;">1297066</div></div>
<div class="c" style="left:610px;top:242px;width:58px;height:16px"><div class="t" style="top:8.95px;font-family:'Liberation Serif', serif;font-size:12px;font-weight:400;color:#000;left:0px;width:58px;text-align:center;">14575</div></div>
<div class="c" style="left:669px;top:242px;width:58px;height:16px"><div class="t" style="top:8.95px;font-family:'Liberation Serif', serif;font-size:12px;font-weight:400;color:#000;left:0px;width:58px;text-align:center;">442959</div></div>
<div class="c" style="left:728px;top:242px;width:58px;height:16px"><div class="t" style="top:8.95px;font-family:'Liberation Serif', serif;font-size:12px;font-weight:400;color:#000;left:0px;width:58px;text-align:center;">118920</div></div>
<div class="c" style="left:787px;top:242px;width:58px;height:16px"><div class="t" style="top:8.95px;font-family:'Liberation Serif', serif;font-size:12px;font-weight:400;color:#000;left:0px;width:58px;text-align:center;">339902</div></div>
<div class="c" style="left:846px;top:242px;width:58px;height:16px"><div class="t" style="top:8.95px;font-family:'Liberation Serif', serif;font-size:12px;font-weight:400;color:#000;left:0px;width:58px;text-align:center;">119801</div></div>
<div class="c" style="left:905px;top:242px;width:58px;height:16px"><div class="t" style="top:8.95px;font-family:'Liberation Serif', serif;font-size:12px;font-weight:400;color:#000;left:0px;width:58px;text-align:center;">117417</div></div>
<div class="c" style="left:964px;top:242px;width:58px;height:16px"><div class="t" style="top:8.95px;font-family:'Liberation Serif', serif;font-size:12px;font-weight:400;color:#000;left:0px;width:58px;text-align:center;">81712</div></div>
<div class="c" style="left:1023px;top:242px;width:58px;height:16px"><div class="t" style="top:8.95px;font-family:'Liberation Serif', serif;font-size:12px;font-weight:400;color:#000;left:0px;width:58px;text-align:center;">432325</div></div>
<div class="c" style="left:1082px;top:242px;width:58px;height:16px"><div class="t" style="top:8.95px;font-family:'Liberation Serif', serif;font-size:12px;font-weight:400;color:#000;left:0px;width:58px;text-align:center;">141289</div></div>
<div class="c" style="left:1141px;top:242px;width:58px;height:16px"><div class="t" style="top:8.95px;font-family:'Liberation Serif', serif;font-size:12px;font-weight:400;color:#000;left:0px;width:58px;text-align:center;">41536</div></div>
<div class="c" style="left:1200px;top:242px;width:58px;height:16px"><div class="t" style="top:8.95px;font-family:'Liberation Serif', serif;font-size:12px;font-weight:400;color:#000;left:0px;width:58px;text-align:center;">1850436</div></div>
<div class="c" style="left:1259px;top:242px;width:58px;height:16px"><div class="t" style="top:8.95px;font-family:'Liberation Serif', serif;font-size:12px;font-weight:400;color:#000;left:0px;width:58px;text-align:center;">134104</div></div>
<div class="c" style="left:610px;top:259px;width:58px;height:16px"><div class="t" style="top:8.95px;font-family:'Liberation Serif', serif;font-size:12px;font-weight:400;color:#000;left:0px;width:58px;text-align:center;">774</div></div>
<div class="c" style="left:669px;top:259px;width:58px;height:16px"><div class="t" style="top:8.95px;font-family:'Liberation Serif', serif;font-size:12px;font-weight:400;color:#000;left:0px;width:58px;text-align:center;">28135</div></div>
<div class="c" style="left:728px;top:259px;width:58px;height:16px"><div class="t" style="top:8.95px;font-family:'Liberation Serif', serif;font-size:12px;font-weight:400;color:#000;left:0px;width:58px;text-align:center;">5562</div></div>
<div class="c" style="left:787px;top:259px;width:58px;height:16px"><div class="t" style="top:8.95px;font-family:'Liberation Serif', serif;font-size:12px;font-weight:400;color:#000;left:0px;width:58px;text-align:center;">19137</div></div>
<div class="c" style="left:846px;top:259px;width:58px;height:16px"><div class="t" style="top:8.95px;font-family:'Liberation Serif', serif;font-size:12px;font-weight:400;color:#000;left:0px;width:58px;text-align:center;">7268</div></div>
<div class="c" style="left:905px;top:259px;width:58px;height:16px"><div class="t" style="top:8.95px;font-family:'Liberation Serif', serif;font-size:12px;font-weight:400;color:#000;left:0px;width:58px;text-align:center;">7130</div></div>
<div class="c" style="left:964px;top:259px;width:58px;height:16px"><div class="t" style="top:8.95px;font-family:'Liberation Serif', serif;font-size:12px;font-weight:400;color:#000;left:0px;width:58px;text-align:center;">9061</div></div>
<div class="c" style="left:1023px;top:259px;width:58px;height:16px"><div class="t" style="top:8.95px;font-family:'Liberation Serif', serif;font-size:12px;font-weight:400;color:#000;left:0px;width:58px;text-align:center;">22327</div></div>
<div class="c" style="left:1082px;top:259px;width:58px;height:16px"><div class="t" style="top:8.95px;font-family:'Liberation Serif', serif;font-size:12px;font-weight:400;color:#000;left:0px;width:58px;text-align:center;">115676</div></div>
<div class="c" style="left:1141px;top:259px;width:58px;height:16px"><div class="t" style="top:8.95px;font-family:'Liberation Serif', serif;font-size:12px;font-weight:400;color:#000;left:0px;width:58px;text-align:center;">3855</div></div>
<div class="c" style="left:1200px;top:259px;width:58px;height:16px"><div class="t" style="top:8.95px;font-family:'Liberation Serif', serif;font-size:12px;font-weight:400;color:#000;left:0px;width:58px;text-align:center;">218926</div></div>
<div class="c" style="left:1259px;top:259px;width:58px;height:16px"><div class="t" style="top:8.95px;font-family:'Liberation Serif', serif;font-size:12px;font-weight:400;color:#000;left:0px;width:58px;text-align:center;">328360</div></div>
<div class="c" style="left:610px;top:276px;width:58px;height:16px"><div class="t" style="top:8.95px;font-family:'Liberation Serif', serif;font-size:12px;font-weight:400;color:#000;left:0px;width:58px;text-align:center;">689</div></div>
<div class="c" style="left:669px;top:276px;width:58px;height:16px"><div class="t" style="top:8.95px;font-family:'Liberation Serif', serif;font-size:12px;font-weight:400;color:#000;left:0px;width:58px;text-align:center;">16927</div></div>
<div class="c" style="left:728px;top:276px;width:58px;height:16px"><div class="t" style="top:8.95px;font-family:'Liberation Serif', serif;font-size:12px;font-weight:400;color:#000;left:0px;width:58px;text-align:center;">3274</div></div>
<div class="c" style="left:787px;top:276px;width:58px;height:16px"><div class="t" style="top:8.95px;font-family:'Liberation Serif', serif;font-size:12px;font-weight:400;color:#000;left:0px;width:58px;text-align:center;">18400</div></div>
<div class="c" style="left:846px;top:276px;width:58px;height:16px"><div class="t" style="top:8.95px;font-family:'Liberation Serif', serif;font-size:12px;font-weight:400;color:#000;left:0px;width:58px;text-align:center;">15076</div></div>
<div class="c" style="left:905px;top:276px;width:58px;height:16px"><div class="t" style="top:8.95px;font-family:'Liberation Serif', serif;font-size:12px;font-weight:400;color:#000;left:0px;width:58px;text-align:center;">5425</div></div>
<div class="c" style="left:964px;top:276px;width:58px;height:16px"><div class="t" style="top:8.95px;font-family:'Liberation Serif', serif;font-size:12px;font-weight:400;color:#000;left:0px;width:58px;text-align:center;">3304</div></div>
<div class="c" style="left:1023px;top:276px;width:58px;height:16px"><div class="t" style="top:8.95px;font-family:'Liberation Serif', serif;font-size:12px;font-weight:400;color:#000;left:0px;width:58px;text-align:center;">17236</div></div>
<div class="c" style="left:1082px;top:276px;width:58px;height:16px"><div class="t" style="top:8.95px;font-family:'Liberation Serif', serif;font-size:12px;font-weight:400;color:#000;left:0px;width:58px;text-align:center;">20679</div></div>
<div class="c" style="left:1141px;top:276px;width:58px;height:16px"><div class="t" style="top:8.95px;font-family:'Liberation Serif', serif;font-size:12px;font-weight:400;color:#000;left:0px;width:58px;text-align:center;">35537</div></div>
<div class="c" style="left:1200px;top:276px;width:58px;height:16px"><div class="t" style="top:8.95px;font-family:'Liberation Serif', serif;font-size:12px;font-weight:400;color:#000;left:0px;width:58px;text-align:center;">136547</div></div>
<div class="c" style="left:1259px;top:276px;width:58px;height:16px"><div class="t" style="top:8.95px;font-family:'Liberation Serif', serif;font-size:12px;font-weight:400;color:#000;left:0px;width:58px;text-align:center;">297994</div></div>
<div class="c" style="left:610px;top:293px;width:58px;height:16px"><div class="t" style="top:8.95px;font-family:'Liberation Serif', serif;font-size:12px;font-weight:400;color:#000;left:0px;width:58px;text-align:center;">188930</div></div>
<div class="c" style="left:669px;top:293px;width:58px;height:16px"><div class="t" style="top:8.95px;font-family:'Liberation Serif', serif;font-size:12px;font-weight:400;color:#000;left:0px;width:58px;text-align:center;">4069694</div></div>
<div class="c" style="left:728px;top:293px;width:58px;height:16px"><div class="t" style="top:8.95px;font-family:'Liberation Serif', serif;font-size:12px;font-weight:400;color:#000;left:0px;width:58px;text-align:center;">922839</div></div>
<div class="c" style="left:787px;top:293px;width:58px;height:16px"><div class="t" style="top:8.95px;font-family:'Liberation Serif', serif;font-size:12px;font-weight:400;color:#000;left:0px;width:58px;text-align:center;">1906971</div></div>
<div class="c" style="left:846px;top:293px;width:58px;height:16px"><div class="t" style="top:8.95px;font-family:'Liberation Serif', serif;font-size:12px;font-weight:400;color:#000;left:0px;width:58px;text-align:center;">509519</div></div>
<div class="c" style="left:905px;top:293px;width:58px;height:16px"><div class="t" style="top:8.95px;font-family:'Liberation Serif', serif;font-size:12px;font-weight:400;color:#000;left:0px;width:58px;text-align:center;">576355</div></div>
<div class="c" style="left:964px;top:293px;width:58px;height:16px"><div class="t" style="top:8.95px;font-family:'Liberation Serif', serif;font-size:12px;font-weight:400;color:#000;left:0px;width:58px;text-align:center;">512688</div></div>
<div class="c" style="left:1023px;top:293px;width:58px;height:16px"><div class="t" style="top:8.95px;font-family:'Liberation Serif', serif;font-size:12px;font-weight:400;color:#000;left:0px;width:58px;text-align:center;">977170</div></div>
<div class="c" style="left:1082px;top:293px;width:58px;height:16px"><div class="t" style="top:8.95px;font-family:'Liberation Serif', serif;font-size:12px;font-weight:400;color:#000;left:0px;width:58px;text-align:center;">779602</div></div>
<div class="c" style="left:1141px;top:293px;width:58px;height:16px"><div class="t" style="top:8.95px;font-family:'Liberation Serif', serif;font-size:12px;font-weight:400;color:#000;left:0px;width:58px;text-align:center;">196589</div></div>
<div class="c" style="left:1200px;top:293px;width:58px;height:16px"><div class="t" style="top:8.95px;font-family:'Liberation Serif', serif;font-size:12px;font-weight:400;color:#000;left:0px;width:58px;text-align:center;">10640357</div></div>
<div class="c" style="left:1259px;top:293px;width:58px;height:16px"><div class="t" style="top:8.95px;font-family:'Liberation Serif', serif;font-size:12px;font-weight:400;color:#000;left:0px;width:58px;text-align:center;">6060655</div></div>
<div class="c" style="left:610px;top:310px;width:58px;height:16px"><div class="t" style="top:8.95px;font-family:'Liberation Serif', serif;font-size:12px;font-weight:400;color:#000;left:0px;width:58px;text-align:center;">14189</div></div>
<div class="c" style="left:669px;top:310px;width:58px;height:16px"><div class="t" style="top:8.95px;font-family:'Liberation Serif', serif;font-size:12px;font-weight:400;color:#000;left:0px;width:58px;text-align:center;">761465</div></div>
<div class="c" style="left:728px;top:310px;width:58px;height:16px"><div class="t" style="top:8.95px;font-family:'Liberation Serif', serif;font-size:12px;font-weight:400;color:#000;left:0px;width:58px;text-align:center;">56438</div></div>
<div class="c" style="left:787px;top:310px;width:58px;height:16px"><div class="t" style="top:8.95px;font-family:'Liberation Serif', serif;font-size:12px;font-weight:400;color:#000;left:0px;width:58px;text-align:center;">178383</div></div>
<div class="c" style="left:846px;top:310px;width:58px;height:16px"><div class="t" style="top:8.95px;font-family:'Liberation Serif', serif;font-size:12px;font-weight:400;color:#000;left:0px;width:58px;text-align:center;">43288</div></div>
<div class="c" style="left:905px;top:310px;width:58px;height:16px"><div class="t" style="top:8.95px;font-family:'Liberation Serif', serif;font-size:12px;font-weight:400;color:#000;left:0px;width:58px;text-align:center;">34490</div></div>
<div class="c" style="left:964px;top:310px;width:58px;height:16px"><div class="t" style="top:8.95px;font-family:'Liberation Serif', serif;font-size:12px;font-weight:400;color:#000;left:0px;width:58px;text-align:center;">16466</div></div>
<div class="c" style="left:1023px;top:310px;width:58px;height:16px"><div class="t" style="top:8.95px;font-family:'Liberation Serif', serif;font-size:12px;font-weight:400;color:#000;left:0px;width:58px;text-align:center;">70016</div></div>
<div class="c" style="left:1082px;top:310px;width:58px;height:16px"><div class="t" style="top:8.95px;font-family:'Liberation Serif', serif;font-size:12px;font-weight:400;color:#000;left:0px;width:58px;text-align:center;">62468</div></div>
<div class="c" style="left:1141px;top:310px;width:58px;height:16px"><div class="t" style="top:8.95px;font-family:'Liberation Serif', serif;font-size:12px;font-weight:400;color:#000;left:0px;width:58px;text-align:center;">12538</div></div>
<div class="c" style="left:1200px;top:310px;width:58px;height:16px"><div class="t" style="top:8.95px;font-family:'Liberation Serif', serif;font-size:12px;font-weight:400;color:#000;left:0px;width:58px;text-align:center;">1249740</div></div>
<div class="c" style="left:1259px;top:310px;width:58px;height:16px"><div class="t" style="top:8.95px;font-family:'Liberation Serif', serif;font-size:12px;font-weight:400;color:#000;left:0px;width:58px;text-align:center;">313114</div></div>
<div class="c" style="left:610px;top:327px;width:58px;height:17px"><div class="t" style="top:9.95px;font-family:'Liberation Serif', serif;font-size:12px;font-weight:400;color:#000;left:0px;width:58px;text-align:center;">6041</div></div>
<div class="c" style="left:669px;top:327px;width:58px;height:17px"><div class="t" style="top:9.95px;font-family:'Liberation Serif', serif;font-size:12px;font-weight:400;color:#000;left:0px;width:58px;text-align:center;">64751</div></div>
<div class="c" style="left:728px;top:327px;width:58px;height:17px"><div class="t" style="top:9.95px;font-family:'Liberation Serif', serif;font-size:12px;font-weight:400;color:#000;left:0px;width:58px;text-align:center;">23783</div></div>
<div class="c" style="left:787px;top:327px;width:58px;height:17px"><div class="t" style="top:9.95px;font-family:'Liberation Serif', serif;font-size:12px;font-weight:400;color:#000;left:0px;width:58px;text-align:center;">78120</div></div>
<div class="c" style="left:846px;top:327px;width:58px;height:17px"><div class="t" style="top:9.95px;font-family:'Liberation Serif', serif;font-size:12px;font-weight:400;color:#000;left:0px;width:58px;text-align:center;">9373</div></div>
<div class="c" style="left:905px;top:327px;width:58px;height:17px"><div class="t" style="top:9.95px;font-family:'Liberation Serif', serif;font-size:12px;font-weight:400;color:#000;left:0px;width:58px;text-align:center;">38399</div></div>
<div class="c" style="left:964px;top:327px;width:58px;height:17px"><div class="t" style="top:9.95px;font-family:'Liberation Serif', serif;font-size:12px;font-weight:400;color:#000;left:0px;width:58px;text-align:center;">23074</div></div>
<div class="c" style="left:1023px;top:327px;width:58px;height:17px"><div class="t" style="top:9.95px;font-family:'Liberation Serif', serif;font-size:12px;font-weight:400;color:#000;left:0px;width:58px;text-align:center;">24962</div></div>
<div class="c" style="left:1082px;top:327px;width:58px;height:17px"><div class="t" style="top:9.95px;font-family:'Liberation Serif', serif;font-size:12px;font-weight:400;color:#000;left:0px;width:58px;text-align:center;">96756</div></div>
<div class="c" style="left:1141px;top:327px;width:58px;height:17px"><div class="t" style="top:9.95px;font-family:'Liberation Serif', serif;font-size:12px;font-weight:400;color:#000;left:0px;width:58px;text-align:center;">14135</div></div>
<div class="c" style="left:1200px;top:327px;width:58px;height:17px"><div class="t" style="top:9.95px;font-family:'Liberation Serif', serif;font-size:12px;font-weight:400;color:#000;left:0px;width:58px;text-align:center;">379394</div></div>
<div class="c" style="left:1259px;top:327px;width:58px;height:17px"><div class="t" style="top:9.95px;font-family:'Liberation Serif', serif;font-size:12px;font-weight:400;color:#000;left:0px;width:58px;text-align:center;">794131</div></div>
<div class="c" style="left:610px;top:345px;width:58px;height:16px"><div class="t" style="top:8.95px;font-family:'Liberation Serif', serif;font-size:12px;font-weight:400;color:#000;left:0px;width:58px;text-align:center;">209160</div></div>
<div class="c" style="left:669px;top:345px;width:58px;height:16px"><div class="t" style="top:8.95px;font-family:'Liberation Serif', serif;font-size:12px;font-weight:400;color:#000;left:0px;width:58px;text-align:center;">4895909</div></div>
<div class="c" style="left:728px;top:345px;width:58px;height:16px"><div class="t" style="top:8.95px;font-family:'Liberation Serif', serif;font-size:12px;font-weight:400;color:#000;left:0px;width:58px;text-align:center;">1003060</div></div>
<div class="c" style="left:787px;top:345px;width:58px;height:16px"><div class="t" style="top:8.95px;font-family:'Liberation Serif', serif;font-size:12px;font-weight:400;color:#000;left:0px;width:58px;text-align:center;">2163474</div></div>
<div class="c" style="left:846px;top:345px;width:58px;height:16px"><div class="t" style="top:8.95px;font-family:'Liberation Serif', serif;font-size:12px;font-weight:400;color:#000;left:0px;width:58px;text-align:center;">562181</div></div>
<div class="c" style="left:905px;top:345px;width:58px;height:16px"><div class="t" style="top:8.95px;font-family:'Liberation Serif', serif;font-size:12px;font-weight:400;color:#000;left:0px;width:58px;text-align:center;">649243</div></div>
<div class="c" style="left:964px;top:345px;width:58px;height:16px"><div class="t" style="top:8.95px;font-family:'Liberation Serif', serif;font-size:12px;font-weight:400;color:#000;left:0px;width:58px;text-align:center;">552229</div></div>
<div class="c" style="left:1023px;top:345px;width:58px;height:16px"><div class="t" style="top:8.95px;font-family:'Liberation Serif', serif;font-size:12px;font-weight:400;color:#000;left:0px;width:58px;text-align:center;">1072147</div></div>
<div class="c" style="left:1082px;top:345px;width:58px;height:16px"><div class="t" style="top:8.95px;font-family:'Liberation Serif', serif;font-size:12px;font-weight:400;color:#000;left:0px;width:58px;text-align:center;">938826</div></div>
<div class="c" style="left:1141px;top:345px;width:58px;height:16px"><div class="t" style="top:8.95px;font-family:'Liberation Serif', serif;font-size:12px;font-weight:400;color:#000;left:0px;width:58px;text-align:center;">223262</div></div>
<div class="c" style="left:1200px;top:345px;width:58px;height:16px"><div class="t" style="top:8.95px;font-family:'Liberation Serif', serif;font-size:12px;font-weight:400;color:#000;left:0px;width:58px;text-align:center;">12269491</div></div>
<div class="c" style="left:1259px;top:345px;width:58px;height:16px"><div class="t" style="top:8.95px;font-family:'Liberation Serif', serif;font-size:12px;font-weight:400;color:#000;left:0px;width:58px;text-align:center;">7167900</div></div>
<div class="c" style="left:610px;top:362px;width:58px;height:19px"><div class="t" style="top:11.95px;font-family:'Liberation Serif', serif;font-size:12px;font-weight:400;color:#000;left:0px;width:58px;text-align:center;">50310</div></div>
<div class="c" style="left:669px;top:362px;width:58px;height:19px"><div class="t" style="top:11.95px;font-family:'Liberation Serif', serif;font-size:12px;font-weight:400;color:#000;left:0px;width:58px;text-align:center;">1187782</div></div>
<div class="c" style="left:728px;top:362px;width:58px;height:19px"><div class="t" style="top:11.95px;font-family:'Liberation Serif', serif;font-size:12px;font-weight:400;color:#000;left:0px;width:58px;text-align:center;">379525</div></div>
<div class="c" style="left:787px;top:362px;width:58px;height:19px"><div class="t" style="top:11.95px;font-family:'Liberation Serif', serif;font-size:12px;font-weight:400;color:#000;left:0px;width:58px;text-align:center;">1235575</div></div>
<div class="c" style="left:846px;top:362px;width:58px;height:19px"><div class="t" style="top:11.95px;font-family:'Liberation Serif', serif;font-size:12px;font-weight:400;color:#000;left:0px;width:58px;text-align:center;">297254</div></div>
<div class="c" style="left:905px;top:362px;width:58px;height:19px"><div class="t" style="top:11.95px;font-family:'Liberation Serif', serif;font-size:12px;font-weight:400;color:#000;left:0px;width:58px;text-align:center;">320507</div></div>
<div class="c" style="left:964px;top:362px;width:58px;height:19px"><div class="t" style="top:11.95px;font-family:'Liberation Serif', serif;font-size:12px;font-weight:400;color:#000;left:0px;width:58px;text-align:center;">104373</div></div>
<div class="c" style="left:1023px;top:362px;width:58px;height:19px"><div class="t" style="top:11.95px;font-family:'Liberation Serif', serif;font-size:12px;font-weight:400;color:#000;left:0px;width:58px;text-align:center;">727111</div></div>
<div class="c" style="left:1082px;top:362px;width:58px;height:19px"><div class="t" style="top:11.95px;font-family:'Liberation Serif', serif;font-size:12px;font-weight:400;color:#000;left:0px;width:58px;text-align:center;">1682164</div></div>
<div class="c" style="left:1141px;top:362px;width:58px;height:19px"><div class="t" style="top:11.95px;font-family:'Liberation Serif', serif;font-size:12px;font-weight:400;color:#000;left:0px;width:58px;text-align:center;">241726</div></div>
<div class="c" style="left:1200px;top:362px;width:58px;height:19px"><div class="t" style="top:11.95px;font-family:'Liberation Serif', serif;font-size:12px;font-weight:400;color:#000;left:0px;width:58px;text-align:center;">6226326</div></div>
<div class="c" style="left:610px;top:382px;width:58px;height:19px"><div class="t" style="top:11.95px;font-family:'Liberation Serif', serif;font-size:12px;font-weight:400;color:#000;left:0px;width:58px;text-align:center;">41046</div></div>
<div class="c" style="left:669px;top:382px;width:58px;height:19px"><div class="t" style="top:11.95px;font-family:'Liberation Serif', serif;font-size:12px;font-weight:400;color:#000;left:0px;width:58px;text-align:center;">933033</div></div>
<div class="c" style="left:728px;top:382px;width:58px;height:19px"><div class="t" style="top:11.95px;font-family:'Liberation Serif', serif;font-size:12px;font-weight:400;color:#000;left:0px;width:58px;text-align:center;">303436</div></div>
<div class="c" style="left:787px;top:382px;width:58px;height:19px"><div class="t" style="top:11.95px;font-family:'Liberation Serif', serif;font-size:12px;font-weight:400;color:#000;left:0px;width:58px;text-align:center;">997664</div></div>
<div class="c" style="left:846px;top:382px;width:58px;height:19px"><div class="t" style="top:11.95px;font-family:'Liberation Serif', serif;font-size:12px;font-weight:400;color:#000;left:0px;width:58px;text-align:center;">236340</div></div>
<div class="c" style="left:905px;top:382px;width:58px;height:19px"><div class="t" style="top:11.95px;font-family:'Liberation Serif', serif;font-size:12px;font-weight:400;color:#000;left:0px;width:58px;text-align:center;">246785</div></div>
<div class="c" style="left:964px;top:382px;width:58px;height:19px"><div class="t" style="top:11.95px;font-family:'Liberation Serif', serif;font-size:12px;font-weight:400;color:#000;left:0px;width:58px;text-align:center;">83586</div></div>
<div class="c" style="left:1023px;top:382px;width:58px;height:19px"><div class="t" style="top:11.95px;font-family:'Liberation Serif', serif;font-size:12px;font-weight:400;color:#000;left:0px;width:58px;text-align:center;">580222</div></div>
<div class="c" style="left:1082px;top:382px;width:58px;height:19px"><div class="t" style="top:11.95px;font-family:'Liberation Serif', serif;font-size:12px;font-weight:400;color:#000;left:0px;width:58px;text-align:center;">1288614</div></div>
<div class="c" style="left:1141px;top:382px;width:58px;height:19px"><div class="t" style="top:11.95px;font-family:'Liberation Serif', serif;font-size:12px;font-weight:400;color:#000;left:0px;width:58px;text-align:center;">197544</div></div>
<div class="c" style="left:1200px;top:382px;width:58px;height:19px"><div class="t" style="top:11.95px;font-family:'Liberation Serif', serif;font-size:12px;font-weight:400;color:#000;left:0px;width:58px;text-align:center;">4908270</div></div>
<div class="c" style="left:610px;top:402px;width:58px;height:19px"><div class="t" style="top:11.95px;font-family:'Liberation Serif', serif;font-size:12px;font-weight:400;color:#000;left:0px;width:58px;text-align:center;">-30203</div></div>
<div class="c" style="left:669px;top:402px;width:58px;height:19px"><div class="t" style="top:11.95px;font-family:'Liberation Serif', serif;font-size:12px;font-weight:400;color:#000;left:0px;width:58px;text-align:center;">32838</div></div>
<div class="c" style="left:728px;top:402px;width:58px;height:19px"><div class="t" style="top:11.95px;font-family:'Liberation Serif', serif;font-size:12px;font-weight:400;color:#000;left:0px;width:58px;text-align:center;">34439</div></div>
<div class="c" style="left:787px;top:402px;width:58px;height:19px"><div class="t" style="top:11.95px;font-family:'Liberation Serif', serif;font-size:12px;font-weight:400;color:#000;left:0px;width:58px;text-align:center;">59346</div></div>
<div class="c" style="left:846px;top:402px;width:58px;height:19px"><div class="t" style="top:11.95px;font-family:'Liberation Serif', serif;font-size:12px;font-weight:400;color:#000;left:0px;width:58px;text-align:center;">5386</div></div>
<div class="c" style="left:905px;top:402px;width:58px;height:19px"><div class="t" style="top:11.95px;font-family:'Liberation Serif', serif;font-size:12px;font-weight:400;color:#000;left:0px;width:58px;text-align:center;">6728</div></div>
<div class="c" style="left:964px;top:402px;width:58px;height:19px"><div class="t" style="top:11.95px;font-family:'Liberation Serif', serif;font-size:12px;font-weight:400;color:#000;left:0px;width:58px;text-align:center;">17353</div></div>
<div class="c" style="left:1023px;top:402px;width:58px;height:19px"><div class="t" style="top:11.95px;font-family:'Liberation Serif', serif;font-size:12px;font-weight:400;color:#000;left:0px;width:58px;text-align:center;">-2306</div></div>
<div class="c" style="left:1082px;top:402px;width:58px;height:19px"><div class="t" style="top:11.95px;font-family:'Liberation Serif', serif;font-size:12px;font-weight:400;color:#000;left:0px;width:58px;text-align:center;">14903</div></div>
<div class="c" style="left:1141px;top:402px;width:58px;height:19px"><div class="t" style="top:11.95px;font-family:'Liberation Serif', serif;font-size:12px;font-weight:400;color:#000;left:0px;width:58px;text-align:center;">-1056</div></div>
<div class="c" style="left:1200px;top:402px;width:58px;height:19px"><div class="t" style="top:11.95px;font-family:'Liberation Serif', serif;font-size:12px;font-weight:400;color:#000;left:0px;width:58px;text-align:center;">137428</div></div>
<div class="c" style="left:610px;top:422px;width:58px;height:19px"><div class="t" style="top:11.95px;font-family:'Liberation Serif', serif;font-size:12px;font-weight:400;color:#000;left:0px;width:58px;text-align:center;">67907</div></div>
<div class="c" style="left:669px;top:422px;width:58px;height:19px"><div class="t" style="top:11.95px;font-family:'Liberation Serif', serif;font-size:12px;font-weight:400;color:#000;left:0px;width:58px;text-align:center;">397223</div></div>
<div class="c" style="left:728px;top:422px;width:58px;height:19px"><div class="t" style="top:11.95px;font-family:'Liberation Serif', serif;font-size:12px;font-weight:400;color:#000;left:0px;width:58px;text-align:center;">55268</div></div>
<div class="c" style="left:787px;top:422px;width:58px;height:19px"><div class="t" style="top:11.95px;font-family:'Liberation Serif', serif;font-size:12px;font-weight:400;color:#000;left:0px;width:58px;text-align:center;">290804</div></div>
<div class="c" style="left:846px;top:422px;width:58px;height:19px"><div class="t" style="top:11.95px;font-family:'Liberation Serif', serif;font-size:12px;font-weight:400;color:#000;left:0px;width:58px;text-align:center;">102487</div></div>
<div class="c" style="left:905px;top:422px;width:58px;height:19px"><div class="t" style="top:11.95px;font-family:'Liberation Serif', serif;font-size:12px;font-weight:400;color:#000;left:0px;width:58px;text-align:center;">54055</div></div>
<div class="c" style="left:964px;top:422px;width:58px;height:19px"><div class="t" style="top:11.95px;font-family:'Liberation Serif', serif;font-size:12px;font-weight:400;color:#000;left:0px;width:58px;text-align:center;">414751</div></div>
<div class="c" style="left:1023px;top:422px;width:58px;height:19px"><div class="t" style="top:11.95px;font-family:'Liberation Serif', serif;font-size:12px;font-weight:400;color:#000;left:0px;width:58px;text-align:center;">162988</div></div>
<div class="c" style="left:1082px;top:422px;width:58px;height:19px"><div class="t" style="top:11.95px;font-family:'Liberation Serif', serif;font-size:12px;font-weight:400;color:#000;left:0px;width:58px;text-align:center;">284331</div></div>
<div class="c" style="left:1141px;top:422px;width:58px;height:19px"><div class="t" style="top:11.95px;font-family:'Liberation Serif', serif;font-size:12px;font-weight:400;color:#000;left:0px;width:58px;text-align:center;">41416</div></div>
<div class="c" style="left:1200px;top:422px;width:58px;height:19px"><div class="t" style="top:11.95px;font-family:'Liberation Serif', serif;font-size:12px;font-weight:400;color:#000;left:0px;width:58px;text-align:center;">1871230</div></div>
<div class="c" style="left:610px;top:442px;width:58px;height:19px"><div class="t" style="top:11.95px;font-family:'Liberation Serif', serif;font-size:12px;font-weight:400;color:#000;left:0px;width:58px;text-align:center;">94141</div></div>
<div class="c" style="left:669px;top:442px;width:58px;height:19px"><div class="t" style="top:11.95px;font-family:'Liberation Serif', serif;font-size:12px;font-weight:400;color:#000;left:0px;width:58px;text-align:center;">519840</div></div>
<div class="c" style="left:728px;top:442px;width:58px;height:19px"><div class="t" style="top:11.95px;font-family:'Liberation Serif', serif;font-size:12px;font-weight:400;color:#000;left:0px;width:58px;text-align:center;">227298</div></div>
<div class="c" style="left:787px;top:442px;width:58px;height:19px"><div class="t" style="top:11.95px;font-family:'Liberation Serif', serif;font-size:12px;font-weight:400;color:#000;left:0px;width:58px;text-align:center;">511401</div></div>
<div class="c" style="left:846px;top:442px;width:58px;height:19px"><div class="t" style="top:11.95px;font-family:'Liberation Serif', serif;font-size:12px;font-weight:400;color:#000;left:0px;width:58px;text-align:center;">137325</div></div>
<div class="c" style="left:905px;top:442px;width:58px;height:19px"><div class="t" style="top:11.95px;font-family:'Liberation Serif', serif;font-size:12px;font-weight:400;color:#000;left:0px;width:58px;text-align:center;">228929</div></div>
<div class="c" style="left:964px;top:442px;width:58px;height:19px"><div class="t" style="top:11.95px;font-family:'Liberation Serif', serif;font-size:12px;font-weight:400;color:#000;left:0px;width:58px;text-align:center;">763548</div></div>
<div class="c" style="left:1023px;top:442px;width:58px;height:19px"><div class="t" style="top:11.95px;font-family:'Liberation Serif', serif;font-size:12px;font-weight:400;color:#000;left:0px;width:58px;text-align:center;">342729</div></div>
<div class="c" style="left:1082px;top:442px;width:58px;height:19px"><div class="t" style="top:11.95px;font-family:'Liberation Serif', serif;font-size:12px;font-weight:400;color:#000;left:0px;width:58px;text-align:center;">136518</div></div>
<div class="c" style="left:1141px;top:442px;width:58px;height:19px"><div class="t" style="top:11.95px;font-family:'Liberation Serif', serif;font-size:12px;font-weight:400;color:#000;left:0px;width:58px;text-align:center;">111312</div></div>
<div class="c" style="left:1200px;top:442px;width:58px;height:19px"><div class="t" style="top:11.95px;font-family:'Liberation Serif', serif;font-size:12px;font-weight:400;color:#000;left:0px;width:58px;text-align:center;">3073041</div></div>
<div class="c" style="left:610px;top:462px;width:58px;height:19px"><div class="t" style="top:11.95px;font-family:'Liberation Serif', serif;font-size:12px;font-weight:400;color:#000;left:0px;width:58px;text-align:center;">162048</div></div>
<div class="c" style="left:669px;top:462px;width:58px;height:19px"><div class="t" style="top:11.95px;font-family:'Liberation Serif', serif;font-size:12px;font-weight:400;color:#000;left:0px;width:58px;text-align:center;">917063</div></div>
<div class="c" style="left:728px;top:462px;width:58px;height:19px"><div class="t" style="top:11.95px;font-family:'Liberation Serif', serif;font-size:12px;font-weight:400;color:#000;left:0px;width:58px;text-align:center;">282566</div></div>
<div class="c" style="left:787px;top:462px;width:58px;height:19px"><div class="t" style="top:11.95px;font-family:'Liberation Serif', serif;font-size:12px;font-weight:400;color:#000;left:0px;width:58px;text-align:center;">802205</div></div>
<div class="c" style="left:846px;top:462px;width:58px;height:19px"><div class="t" style="top:11.95px;font-family:'Liberation Serif', serif;font-size:12px;font-weight:400;color:#000;left:0px;width:58px;text-align:center;">239812</div></div>
<div class="c" style="left:905px;top:462px;width:58px;height:19px"><div class="t" style="top:11.95px;font-family:'Liberation Serif', serif;font-size:12px;font-weight:400;color:#000;left:0px;width:58px;text-align:center;">282984</div></div>
<div class="c" style="left:964px;top:462px;width:58px;height:19px"><div class="t" style="top:11.95px;font-family:'Liberation Serif', serif;font-size:12px;font-weight:400;color:#000;left:0px;width:58px;text-align:center;">1178299</div></div>
<div class="c" style="left:1023px;top:462px;width:58px;height:19px"><div class="t" style="top:11.95px;font-family:'Liberation Serif', serif;font-size:12px;font-weight:400;color:#000;left:0px;width:58px;text-align:center;">505717</div></div>
<div class="c" style="left:1082px;top:462px;width:58px;height:19px"><div class="t" style="top:11.95px;font-family:'Liberation Serif', serif;font-size:12px;font-weight:400;color:#000;left:0px;width:58px;text-align:center;">420849</div></div>
<div class="c" style="left:1141px;top:462px;width:58px;height:19px"><div class="t" style="top:11.95px;font-family:'Liberation Serif', serif;font-size:12px;font-weight:400;color:#000;left:0px;width:58px;text-align:center;">152728</div></div>
<div class="c" style="left:1200px;top:462px;width:58px;height:19px"><div class="t" style="top:11.95px;font-family:'Liberation Serif', serif;font-size:12px;font-weight:400;color:#000;left:0px;width:58px;text-align:center;">4944271</div></div>
<div class="c" style="left:610px;top:482px;width:58px;height:16px"><div class="t" style="top:9.29px;font-family:'Liberation Serif', serif;font-size:11px;font-weight:400;color:#000;letter-spacing:0.3px;left:0px;width:58px;text-align:center;">0</div></div>
<div class="c" style="left:669px;top:482px;width:58px;height:16px"><div class="t" style="top:9.29px;font-family:'Liberation Serif', serif;font-size:11px;font-weight:400;color:#000;letter-spacing:0.3px;left:0px;width:58px;text-align:center;">0</div></div>
<div class="c" style="left:728px;top:482px;width:58px;height:16px"><div class="t" style="top:9.29px;font-family:'Liberation Serif', serif;font-size:11px;font-weight:400;color:#000;letter-spacing:0.3px;left:0px;width:58px;text-align:center;">0</div></div>
<div class="c" style="left:787px;top:482px;width:58px;height:16px"><div class="t" style="top:9.29px;font-family:'Liberation Serif', serif;font-size:11px;font-weight:400;color:#000;letter-spacing:0.3px;left:0px;width:58px;text-align:center;">0</div></div>
<div class="c" style="left:846px;top:482px;width:58px;height:16px"><div class="t" style="top:9.29px;font-family:'Liberation Serif', serif;font-size:11px;font-weight:400;color:#000;letter-spacing:0.3px;left:0px;width:58px;text-align:center;">0</div></div>
<div class="c" style="left:905px;top:482px;width:58px;height:16px"><div class="t" style="top:9.29px;font-family:'Liberation Serif', serif;font-size:11px;font-weight:400;color:#000;letter-spacing:0.3px;left:0px;width:58px;text-align:center;">0</div></div>
<div class="c" style="left:964px;top:482px;width:58px;height:16px"><div class="t" style="top:9.29px;font-family:'Liberation Serif', serif;font-size:11px;font-weight:400;color:#000;letter-spacing:0.3px;left:0px;width:58px;text-align:center;">0</div></div>
<div class="c" style="left:1023px;top:482px;width:58px;height:16px"><div class="t" style="top:9.29px;font-family:'Liberation Serif', serif;font-size:11px;font-weight:400;color:#000;letter-spacing:0.3px;left:0px;width:58px;text-align:center;">0</div></div>
<div class="c" style="left:1082px;top:482px;width:58px;height:16px"><div class="t" style="top:9.29px;font-family:'Liberation Serif', serif;font-size:11px;font-weight:400;color:#000;letter-spacing:0.3px;left:0px;width:58px;text-align:center;">0</div></div>
<div class="c" style="left:1141px;top:482px;width:58px;height:16px"><div class="t" style="top:9.29px;font-family:'Liberation Serif', serif;font-size:11px;font-weight:400;color:#000;letter-spacing:0.3px;left:0px;width:58px;text-align:center;">0</div></div>
<div class="c" style="left:1200px;top:482px;width:58px;height:16px"><div class="t" style="top:9.29px;font-family:'Liberation Serif', serif;font-size:11px;font-weight:400;color:#000;letter-spacing:0.3px;left:0px;width:58px;text-align:center;">0</div></div>
<div class="c" style="left:610px;top:499px;width:58px;height:17px"><div class="t" style="top:9.95px;font-family:'Liberation Serif', serif;font-size:12px;font-weight:400;color:#000;left:0px;width:58px;text-align:center;">182155</div></div>
<div class="c" style="left:669px;top:499px;width:58px;height:17px"><div class="t" style="top:9.95px;font-family:'Liberation Serif', serif;font-size:12px;font-weight:400;color:#000;left:0px;width:58px;text-align:center;">2137683</div></div>
<div class="c" style="left:728px;top:499px;width:58px;height:17px"><div class="t" style="top:9.95px;font-family:'Liberation Serif', serif;font-size:12px;font-weight:400;color:#000;left:0px;width:58px;text-align:center;">696530</div></div>
<div class="c" style="left:787px;top:499px;width:58px;height:17px"><div class="t" style="top:9.95px;font-family:'Liberation Serif', serif;font-size:12px;font-weight:400;color:#000;left:0px;width:58px;text-align:center;">2097125</div></div>
<div class="c" style="left:846px;top:499px;width:58px;height:17px"><div class="t" style="top:9.95px;font-family:'Liberation Serif', serif;font-size:12px;font-weight:400;color:#000;left:0px;width:58px;text-align:center;">542452</div></div>
<div class="c" style="left:905px;top:499px;width:58px;height:17px"><div class="t" style="top:9.95px;font-family:'Liberation Serif', serif;font-size:12px;font-weight:400;color:#000;left:0px;width:58px;text-align:center;">610219</div></div>
<div class="c" style="left:964px;top:499px;width:58px;height:17px"><div class="t" style="top:9.95px;font-family:'Liberation Serif', serif;font-size:12px;font-weight:400;color:#000;left:0px;width:58px;text-align:center;">1300024</div></div>
<div class="c" style="left:1023px;top:499px;width:58px;height:17px"><div class="t" style="top:9.95px;font-family:'Liberation Serif', serif;font-size:12px;font-weight:400;color:#000;left:0px;width:58px;text-align:center;">1230521</div></div>
<div class="c" style="left:1082px;top:499px;width:58px;height:17px"><div class="t" style="top:9.95px;font-family:'Liberation Serif', serif;font-size:12px;font-weight:400;color:#000;left:0px;width:58px;text-align:center;">2117915</div></div>
<div class="c" style="left:1141px;top:499px;width:58px;height:17px"><div class="t" style="top:9.95px;font-family:'Liberation Serif', serif;font-size:12px;font-weight:400;color:#000;left:0px;width:58px;text-align:center;">393398</div></div>
<div class="c" style="left:1200px;top:499px;width:58px;height:17px"><div class="t" style="top:9.95px;font-family:'Liberation Serif', serif;font-size:12px;font-weight:400;color:#000;left:0px;width:58px;text-align:center;">11308024</div></div>
<div class="c" style="left:610px;top:517px;width:58px;height:17px"><div class="t" style="top:9.95px;font-family:'Liberation Serif', serif;font-size:12px;font-weight:400;color:#000;left:0px;width:58px;text-align:center;">391315</div></div>
<div class="c" style="left:669px;top:517px;width:58px;height:17px"><div class="t" style="top:9.95px;font-family:'Liberation Serif', serif;font-size:12px;font-weight:400;color:#000;left:0px;width:58px;text-align:center;">7033593</div></div>
<div class="c" style="left:728px;top:517px;width:58px;height:17px"><div class="t" style="top:9.95px;font-family:'Liberation Serif', serif;font-size:12px;font-weight:400;color:#000;left:0px;width:58px;text-align:center;">1699591</div></div>
<div class="c" style="left:787px;top:517px;width:58px;height:17px"><div class="t" style="top:9.95px;font-family:'Liberation Serif', serif;font-size:12px;font-weight:400;color:#000;left:0px;width:58px;text-align:center;">4260599</div></div>
<div class="c" style="left:846px;top:517px;width:58px;height:17px"><div class="t" style="top:9.95px;font-family:'Liberation Serif', serif;font-size:12px;font-weight:400;color:#000;left:0px;width:58px;text-align:center;">1104633</div></div>
<div class="c" style="left:905px;top:517px;width:58px;height:17px"><div class="t" style="top:9.95px;font-family:'Liberation Serif', serif;font-size:12px;font-weight:400;color:#000;left:0px;width:58px;text-align:center;">1259462</div></div>
<div class="c" style="left:964px;top:517px;width:58px;height:17px"><div class="t" style="top:9.95px;font-family:'Liberation Serif', serif;font-size:12px;font-weight:400;color:#000;left:0px;width:58px;text-align:center;">1852253</div></div>
<div class="c" style="left:1023px;top:517px;width:58px;height:17px"><div class="t" style="top:9.95px;font-family:'Liberation Serif', serif;font-size:12px;font-weight:400;color:#000;left:0px;width:58px;text-align:center;">2302668</div></div>
<div class="c" style="left:1082px;top:517px;width:58px;height:17px"><div class="t" style="top:9.95px;font-family:'Liberation Serif', serif;font-size:12px;font-weight:400;color:#000;left:0px;width:58px;text-align:center;">3056741</div></div>
<div class="c" style="left:1141px;top:517px;width:58px;height:17px"><div class="t" style="top:9.95px;font-family:'Liberation Serif', serif;font-size:12px;font-weight:400;color:#000;left:0px;width:58px;text-align:center;">616660</div></div>
<div class="c" style="left:1200px;top:517px;width:58px;height:17px"><div class="t" style="top:9.95px;font-family:'Liberation Serif', serif;font-size:12px;font-weight:400;color:#000;left:0px;width:58px;text-align:center;">23577515</div></div>
<div class="c" style="left:610px;top:535px;width:58px;height:17px"><div class="t" style="top:8.45px;font-family:'Liberation Serif', serif;font-size:12px;font-weight:400;color:#000;left:0px;width:58px;text-align:center;">391315</div></div>
<div class="c" style="left:669px;top:535px;width:58px;height:17px"><div class="t" style="top:8.45px;font-family:'Liberation Serif', serif;font-size:12px;font-weight:400;color:#000;left:0px;width:58px;text-align:center;">7033593</div></div>
<div class="c" style="left:728px;top:535px;width:58px;height:17px"><div class="t" style="top:8.45px;font-family:'Liberation Serif', serif;font-size:12px;font-weight:400;color:#000;left:0px;width:58px;text-align:center;">1699591</div></div>
<div class="c" style="left:787px;top:535px;width:58px;height:17px"><div class="t" style="top:8.45px;font-family:'Liberation Serif', serif;font-size:12px;font-weight:400;color:#000;left:0px;width:58px;text-align:center;">4260599</div></div>
<div class="c" style="left:846px;top:535px;width:58px;height:17px"><div class="t" style="top:8.45px;font-family:'Liberation Serif', serif;font-size:12px;font-weight:400;color:#000;left:0px;width:58px;text-align:center;">1104633</div></div>
<div class="c" style="left:905px;top:535px;width:58px;height:17px"><div class="t" style="top:8.45px;font-family:'Liberation Serif', serif;font-size:12px;font-weight:400;color:#000;left:0px;width:58px;text-align:center;">1259462</div></div>
<div class="c" style="left:964px;top:535px;width:58px;height:17px"><div class="t" style="top:8.45px;font-family:'Liberation Serif', serif;font-size:12px;font-weight:400;color:#000;left:0px;width:58px;text-align:center;">1852253</div></div>
<div class="c" style="left:1023px;top:535px;width:58px;height:17px"><div class="t" style="top:8.45px;font-family:'Liberation Serif', serif;font-size:12px;font-weight:400;color:#000;left:0px;width:58px;text-align:center;">2302668</div></div>
<div class="c" style="left:1082px;top:535px;width:58px;height:17px"><div class="t" style="top:8.45px;font-family:'Liberation Serif', serif;font-size:12px;font-weight:400;color:#000;left:0px;width:58px;text-align:center;">3056741</div></div>
<div class="c" style="left:1141px;top:535px;width:58px;height:17px"><div class="t" style="top:8.45px;font-family:'Liberation Serif', serif;font-size:12px;font-weight:400;color:#000;left:0px;width:58px;text-align:center;">616660</div></div>
<div style="left:31px;top:121px;width:38px;height:2px;background:#000000;"></div>
<div style="left:31px;top:138px;width:38px;height:2px;background:#000000;"></div>
<div style="left:31px;top:121px;width:2px;height:19px;background:#000000;"></div>
<div style="left:68px;top:121px;width:2px;height:19px;background:#000000;"></div>
<div style="left:68px;top:138px;width:6px;height:6px;background:#000000;"></div>
</div>
</body></html>
